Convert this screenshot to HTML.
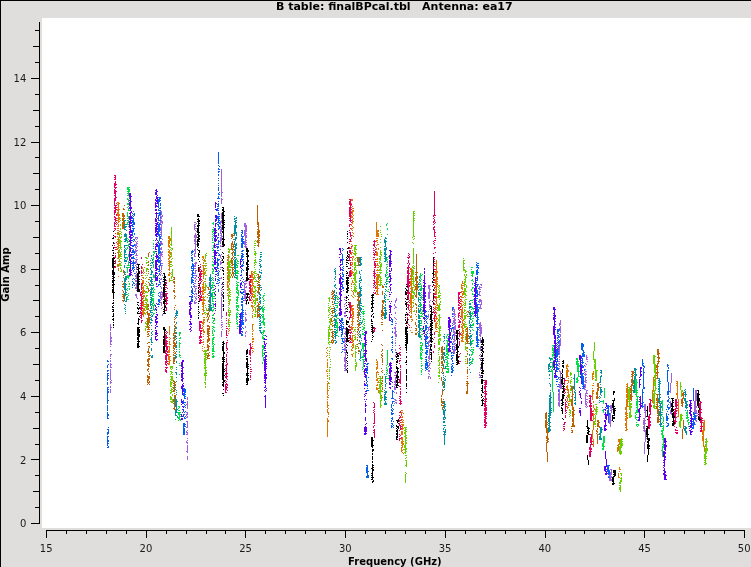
<!DOCTYPE html>
<html><head><meta charset="utf-8"><title>B table: finalBPcal.tbl Antenna: ea17</title>
<style>
html,body{margin:0;padding:0;background:#dfdedc;}
body{width:751px;height:567px;overflow:hidden;position:relative;font-family:"DejaVu Sans","Liberation Sans",sans-serif;}
svg{position:absolute;left:0;top:0;display:block}
svg{will-change:transform}
text{font-family:"DejaVu Sans","Liberation Sans",sans-serif;font-size:10px;fill:#1a1a1a}
.t{font-size:11px}
.b{font-weight:bold;fill:#000}
</style></head><body>
<svg width="751" height="567" viewBox="0 0 751 567">
<rect x="0" y="0" width="751" height="567" fill="#dfdedc"/>
<rect x="0" y="0" width="751" height="1" fill="#000"/>
<rect x="0" y="0" width="1" height="567" fill="#000"/>
<rect x="42" y="18" width="709" height="510" fill="#fff"/>

<g fill="#000" shape-rendering="crispEdges">
<rect x="39" y="22" width="1" height="502"/>
<rect x="31" y="523" width="8" height="1"/>
<rect x="35" y="507" width="4" height="1"/>
<rect x="33" y="491" width="6" height="1"/>
<rect x="35" y="475" width="4" height="1"/>
<rect x="31" y="459" width="8" height="1"/>
<rect x="35" y="444" width="4" height="1"/>
<rect x="33" y="428" width="6" height="1"/>
<rect x="35" y="412" width="4" height="1"/>
<rect x="31" y="396" width="8" height="1"/>
<rect x="35" y="380" width="4" height="1"/>
<rect x="33" y="364" width="6" height="1"/>
<rect x="35" y="348" width="4" height="1"/>
<rect x="31" y="332" width="8" height="1"/>
<rect x="35" y="316" width="4" height="1"/>
<rect x="33" y="300" width="6" height="1"/>
<rect x="35" y="285" width="4" height="1"/>
<rect x="31" y="269" width="8" height="1"/>
<rect x="35" y="253" width="4" height="1"/>
<rect x="33" y="237" width="6" height="1"/>
<rect x="35" y="221" width="4" height="1"/>
<rect x="31" y="205" width="8" height="1"/>
<rect x="35" y="189" width="4" height="1"/>
<rect x="33" y="173" width="6" height="1"/>
<rect x="35" y="157" width="4" height="1"/>
<rect x="31" y="142" width="8" height="1"/>
<rect x="35" y="126" width="4" height="1"/>
<rect x="33" y="110" width="6" height="1"/>
<rect x="35" y="94" width="4" height="1"/>
<rect x="31" y="78" width="8" height="1"/>
<rect x="35" y="62" width="4" height="1"/>
<rect x="33" y="46" width="6" height="1"/>
<rect x="35" y="30" width="4" height="1"/>
<rect x="46" y="530" width="699" height="1"/>
<rect x="46" y="530" width="1" height="8"/>
<rect x="66" y="530" width="1" height="4"/>
<rect x="86" y="530" width="1" height="4"/>
<rect x="106" y="530" width="1" height="4"/>
<rect x="126" y="530" width="1" height="4"/>
<rect x="146" y="530" width="1" height="8"/>
<rect x="166" y="530" width="1" height="4"/>
<rect x="186" y="530" width="1" height="4"/>
<rect x="206" y="530" width="1" height="4"/>
<rect x="225" y="530" width="1" height="4"/>
<rect x="245" y="530" width="1" height="8"/>
<rect x="265" y="530" width="1" height="4"/>
<rect x="285" y="530" width="1" height="4"/>
<rect x="305" y="530" width="1" height="4"/>
<rect x="325" y="530" width="1" height="4"/>
<rect x="345" y="530" width="1" height="8"/>
<rect x="365" y="530" width="1" height="4"/>
<rect x="385" y="530" width="1" height="4"/>
<rect x="405" y="530" width="1" height="4"/>
<rect x="425" y="530" width="1" height="4"/>
<rect x="445" y="530" width="1" height="8"/>
<rect x="465" y="530" width="1" height="4"/>
<rect x="485" y="530" width="1" height="4"/>
<rect x="505" y="530" width="1" height="4"/>
<rect x="525" y="530" width="1" height="4"/>
<rect x="545" y="530" width="1" height="8"/>
<rect x="565" y="530" width="1" height="4"/>
<rect x="584" y="530" width="1" height="4"/>
<rect x="604" y="530" width="1" height="4"/>
<rect x="624" y="530" width="1" height="4"/>
<rect x="644" y="530" width="1" height="8"/>
<rect x="664" y="530" width="1" height="4"/>
<rect x="684" y="530" width="1" height="4"/>
<rect x="704" y="530" width="1" height="4"/>
<rect x="724" y="530" width="1" height="4"/>
<rect x="744" y="530" width="1" height="8"/>
</g>
<text x="26.3" y="527.1" text-anchor="end">0</text>
<text x="26.3" y="463.5" text-anchor="end">2</text>
<text x="26.3" y="400.0" text-anchor="end">4</text>
<text x="26.3" y="336.4" text-anchor="end">6</text>
<text x="26.3" y="272.8" text-anchor="end">8</text>
<text x="26.3" y="209.2" text-anchor="end">10</text>
<text x="26.3" y="145.7" text-anchor="end">12</text>
<text x="26.3" y="82.1" text-anchor="end">14</text>
<text x="46.2" y="551.6" text-anchor="middle">15</text>
<text x="145.9" y="551.6" text-anchor="middle">20</text>
<text x="245.6" y="551.6" text-anchor="middle">25</text>
<text x="345.3" y="551.6" text-anchor="middle">30</text>
<text x="445.1" y="551.6" text-anchor="middle">35</text>
<text x="544.8" y="551.6" text-anchor="middle">40</text>
<text x="644.5" y="551.6" text-anchor="middle">45</text>
<text x="744.2" y="551.6" text-anchor="middle">50</text>
<text class="b t" x="394.3" y="9.5" text-anchor="middle" xml:space="preserve">B table: finalBPcal.tbl   Antenna: ea17</text>
<text class="b" x="394.9" y="564.6" text-anchor="middle">Frequency (GHz)</text>
<text class="b" transform="translate(9,274.6) rotate(-90)" text-anchor="middle">Gain Amp</text>
<g shape-rendering="crispEdges" fill="none" stroke-width="1">
<path stroke="#0060f0" d="M107.5 360v2M107.5 365v3M107.5 370v2M107.5 373v8M107.5 382v3M107.5 387v17M107.5 405v6M107.5 412v7M107.5 429v1M107.5 432v3M107.5 436v10M107.5 447v1M108.5 361v1M108.5 364v1M108.5 370v1M108.5 373v1M108.5 375v1M108.5 378v1M108.5 387v1M108.5 389v1M108.5 391v2M108.5 400v1M108.5 414v2M108.5 418v1M108.5 427v1M108.5 429v5M108.5 436v1M108.5 440v2M108.5 443v1M108.5 446v2M132.5 213v1M132.5 215v1M132.5 217v2M132.5 220v3M132.5 224v3M132.5 228v1M132.5 230v6M132.5 237v1M132.5 240v1M132.5 245v2M132.5 248v1M132.5 250v3M132.5 254v1M132.5 257v2M132.5 262v2M132.5 265v1M132.5 267v3M132.5 275v1M132.5 279v1M132.5 281v1M132.5 284v2M132.5 287v1M133.5 211v1M133.5 214v1M133.5 216v1M133.5 218v7M133.5 226v1M133.5 228v4M133.5 236v1M133.5 239v1M133.5 241v1M133.5 245v2M133.5 249v4M133.5 254v1M133.5 256v3M133.5 260v9M133.5 270v2M133.5 278v1M133.5 282v2M134.5 213v3M134.5 222v3M134.5 228v1M134.5 233v2M134.5 239v2M134.5 244v2M134.5 251v3M134.5 258v1M134.5 262v2M134.5 267v1M134.5 269v1M134.5 273v1M134.5 279v1M134.5 283v1M134.5 285v1M158.5 197v1M158.5 199v9M158.5 209v2M158.5 213v1M158.5 215v6M158.5 222v1M158.5 224v12M158.5 241v3M158.5 245v10M158.5 256v7M158.5 266v1M158.5 269v1M158.5 271v1M158.5 275v1M158.5 284v2M158.5 293v1M158.5 295v1M158.5 299v3M158.5 303v2M158.5 306v1M159.5 197v5M159.5 208v1M159.5 210v1M159.5 212v4M159.5 220v1M159.5 223v9M159.5 234v7M159.5 243v11M159.5 255v1M159.5 257v2M159.5 260v3M159.5 265v7M159.5 273v2M159.5 278v1M159.5 280v3M159.5 284v1M159.5 292v1M159.5 296v1M159.5 299v4M159.5 304v1M160.5 197v2M160.5 200v1M160.5 203v3M160.5 207v2M160.5 210v1M160.5 212v3M160.5 217v1M160.5 220v1M160.5 224v1M160.5 229v1M160.5 234v1M160.5 236v3M160.5 241v1M160.5 244v2M160.5 251v2M160.5 261v1M160.5 263v3M160.5 282v1M160.5 286v1M183.5 388v2M183.5 391v1M183.5 393v3M183.5 400v4M183.5 406v1M183.5 409v1M183.5 411v1M183.5 414v1M183.5 416v1M183.5 423v12M184.5 388v11M184.5 402v1M184.5 404v1M184.5 406v1M184.5 412v1M184.5 414v1M184.5 417v2M184.5 423v4M184.5 428v7M185.5 389v4M185.5 394v1M185.5 396v1M185.5 398v1M185.5 402v1M185.5 405v1M185.5 407v1M185.5 411v1M185.5 416v1M185.5 418v1M185.5 424v1M185.5 426v1M191.5 251v3M191.5 255v1M191.5 257v2M191.5 260v1M191.5 266v3M191.5 270v1M191.5 274v1M191.5 277v7M191.5 286v2M191.5 290v3M191.5 294v1M191.5 296v5M192.5 250v3M192.5 254v1M192.5 257v5M192.5 263v4M192.5 268v1M192.5 270v8M192.5 279v4M192.5 288v6M192.5 295v3M192.5 299v3M193.5 251v1M193.5 264v7M193.5 272v2M193.5 275v1M193.5 277v1M193.5 280v1M193.5 282v1M193.5 284v1M193.5 286v1M193.5 293v1M217.5 198v1M217.5 204v1M217.5 206v1M217.5 208v3M217.5 216v3M217.5 222v1M217.5 224v1M217.5 237v2M217.5 244v1M217.5 246v3M217.5 250v1M217.5 252v1M217.5 258v11M217.5 271v1M217.5 273v1M217.5 275v1M217.5 279v1M217.5 281v1M217.5 283v1M218.5 152v12M218.5 165v1M218.5 168v2M218.5 171v2M218.5 174v2M218.5 178v1M218.5 180v1M218.5 183v1M218.5 185v1M218.5 187v4M218.5 193v2M218.5 196v3M218.5 201v1M218.5 203v4M218.5 208v1M218.5 210v1M218.5 212v3M218.5 216v7M218.5 224v3M218.5 228v2M218.5 233v3M218.5 237v1M218.5 240v5M218.5 246v2M218.5 250v1M218.5 253v1M218.5 255v1M218.5 259v2M218.5 263v3M218.5 268v1M218.5 270v1M218.5 272v4M218.5 277v1M218.5 279v2M218.5 283v1M218.5 285v1M218.5 289v3M219.5 166v1M219.5 169v1M219.5 171v1M219.5 192v1M219.5 194v1M219.5 198v1M219.5 214v1M219.5 216v1M219.5 218v1M219.5 220v1M219.5 222v2M219.5 226v3M219.5 241v1M219.5 254v2M219.5 259v1M219.5 271v1M219.5 278v1M219.5 280v1M219.5 282v1M241.5 230v1M241.5 232v1M241.5 234v3M241.5 238v4M241.5 243v5M241.5 251v1M241.5 253v1M241.5 255v3M241.5 259v1M241.5 265v1M241.5 270v3M241.5 274v2M241.5 278v1M241.5 282v1M241.5 284v1M241.5 289v1M241.5 292v2M241.5 298v2M241.5 301v2M241.5 304v2M241.5 309v1M241.5 312v1M241.5 314v5M241.5 321v6M241.5 328v2M241.5 333v3M242.5 230v4M242.5 236v12M242.5 250v2M242.5 253v5M242.5 259v2M242.5 264v3M242.5 269v1M242.5 277v1M242.5 281v1M242.5 285v1M242.5 289v1M242.5 292v2M242.5 296v4M242.5 301v2M242.5 304v21M242.5 327v1M242.5 331v2M242.5 334v2M243.5 236v1M243.5 239v1M243.5 241v3M243.5 250v1M243.5 254v1M243.5 256v1M243.5 259v1M243.5 261v3M243.5 265v1M243.5 270v1M243.5 279v1M243.5 282v1M243.5 289v1M243.5 291v2M243.5 294v1M243.5 298v1M243.5 300v1M243.5 310v1M243.5 312v1M243.5 314v1M243.5 316v1M243.5 320v1M243.5 322v3M243.5 328v1M341.5 318v5M341.5 324v7M341.5 332v1M341.5 334v3M341.5 338v1M341.5 343v1M341.5 352v1M342.5 248v1M342.5 250v1M342.5 254v11M342.5 267v1M342.5 269v2M342.5 272v3M342.5 276v1M342.5 278v2M342.5 281v2M342.5 284v5M342.5 318v3M342.5 322v2M342.5 326v1M342.5 328v7M342.5 338v4M342.5 343v1M342.5 347v1M342.5 349v1M342.5 351v1M343.5 249v1M343.5 259v1M343.5 266v1M343.5 268v1M343.5 270v1M343.5 274v3M343.5 279v1M343.5 281v1M343.5 287v2M343.5 290v1M343.5 322v1M343.5 324v1M343.5 326v3M343.5 338v1M343.5 341v2M343.5 349v1M366.5 364v1M366.5 369v1M366.5 371v2M366.5 376v4M366.5 382v2M366.5 385v1M366.5 390v1M366.5 465v1M366.5 467v6M366.5 476v2M367.5 363v2M367.5 366v5M367.5 372v2M367.5 381v1M367.5 384v3M367.5 388v1M367.5 390v1M367.5 465v13M368.5 363v1M368.5 377v1M368.5 390v1M368.5 471v1M368.5 475v3M391.5 319v1M391.5 321v1M391.5 324v1M391.5 337v1M391.5 342v1M391.5 349v2M391.5 358v1M391.5 398v1M391.5 404v4M391.5 409v2M391.5 412v3M391.5 418v1M391.5 420v2M391.5 423v1M391.5 425v3M392.5 319v4M392.5 324v1M392.5 328v1M392.5 331v2M392.5 336v2M392.5 339v1M392.5 341v3M392.5 345v1M392.5 347v1M392.5 349v1M392.5 351v2M392.5 358v2M392.5 382v1M392.5 386v1M392.5 390v9M392.5 401v3M392.5 408v1M392.5 410v2M392.5 413v2M392.5 417v3M392.5 423v2M392.5 426v1M393.5 391v1M393.5 398v1M393.5 401v1M393.5 405v1M393.5 409v1M393.5 413v1M393.5 421v1M393.5 425v1M393.5 427v1M425.5 311v2M425.5 315v2M425.5 318v1M425.5 320v1M425.5 325v6M425.5 336v4M425.5 341v6M425.5 348v1M425.5 352v2M425.5 357v1M425.5 359v1M425.5 361v1M425.5 363v6M425.5 370v1M426.5 311v1M426.5 315v3M426.5 319v1M426.5 321v2M426.5 325v5M426.5 332v1M426.5 334v6M426.5 341v1M426.5 343v1M426.5 345v4M426.5 350v5M426.5 356v2M426.5 359v7M426.5 367v3M427.5 316v1M427.5 318v1M427.5 323v1M427.5 327v1M427.5 331v1M427.5 333v1M427.5 336v3M427.5 342v2M427.5 346v1M427.5 348v1M427.5 350v3M427.5 354v1M427.5 362v6M427.5 369v1M451.5 328v4M451.5 339v1M451.5 341v2M451.5 352v2M451.5 355v2M451.5 358v2M451.5 364v1M451.5 366v4M451.5 371v2M451.5 375v1M452.5 307v4M452.5 313v2M452.5 316v1M452.5 323v1M452.5 325v1M452.5 327v2M452.5 335v4M452.5 343v2M452.5 346v4M452.5 352v1M452.5 355v1M452.5 357v2M452.5 360v2M452.5 363v1M452.5 365v2M452.5 368v5M453.5 307v1M453.5 327v1M453.5 334v1M453.5 353v1M453.5 355v1M453.5 363v1M453.5 367v1M453.5 370v1M476.5 262v1M476.5 264v2M476.5 267v1M476.5 270v5M476.5 280v1M476.5 282v1M476.5 286v2M476.5 289v3M476.5 293v1M476.5 295v1M476.5 298v1M476.5 300v1M476.5 302v3M476.5 307v2M476.5 310v1M476.5 313v1M476.5 315v1M476.5 317v1M476.5 320v2M476.5 323v1M476.5 327v1M476.5 331v4M476.5 336v5M476.5 342v1M476.5 345v2M477.5 263v1M477.5 265v3M477.5 269v6M477.5 276v5M477.5 284v3M477.5 290v7M477.5 298v1M477.5 304v21M477.5 327v20M478.5 263v1M478.5 265v1M478.5 267v2M478.5 272v1M478.5 284v1M478.5 288v1M478.5 294v1M478.5 301v1M478.5 304v1M478.5 307v1M478.5 309v3M478.5 317v1M478.5 319v1M478.5 323v1M478.5 327v1M478.5 329v1M478.5 339v2M478.5 342v1M478.5 344v1M478.5 346v1M556.5 350v8M556.5 359v1M556.5 361v11M556.5 376v2M556.5 379v1M556.5 381v1M556.5 384v1M557.5 329v5M557.5 335v1M557.5 337v2M557.5 340v1M557.5 342v1M557.5 344v1M557.5 346v1M557.5 348v9M557.5 358v4M557.5 364v2M557.5 367v3M557.5 371v1M557.5 376v1M557.5 379v1M557.5 381v1M557.5 386v1M558.5 329v3M558.5 333v1M558.5 335v3M558.5 339v1M558.5 341v3M558.5 345v1M558.5 347v1M558.5 349v1M558.5 351v1M558.5 353v2M558.5 368v2M558.5 377v2M558.5 384v1M558.5 386v1M558.5 390v2M559.5 329v1M559.5 334v1M559.5 340v2M559.5 345v1M581.5 343v7M581.5 356v1M581.5 358v1M581.5 360v1M581.5 362v1M581.5 364v1M581.5 373v5M581.5 379v2M582.5 343v8M582.5 353v4M582.5 358v6M582.5 365v2M582.5 373v12M582.5 386v1M582.5 388v1M583.5 344v3M583.5 350v7M583.5 362v1M583.5 366v2M583.5 373v1M583.5 376v13M584.5 352v1M584.5 354v3M584.5 365v1M584.5 369v2M584.5 386v1M607.5 405v4M607.5 410v4M607.5 465v7M608.5 405v18M608.5 465v10M608.5 476v2M609.5 406v1M609.5 413v2M609.5 465v1M609.5 470v5M609.5 477v1M642.5 359v7M642.5 389v19M643.5 363v1M643.5 365v2M643.5 368v21M643.5 392v1M643.5 402v1M643.5 406v1M644.5 366v2M644.5 372v1M644.5 387v2M666.5 409v1M666.5 413v8M666.5 422v1M666.5 426v1M667.5 364v3M667.5 370v12M667.5 391v4M667.5 400v2M667.5 405v3M667.5 411v1M667.5 416v5M667.5 423v1M667.5 425v2M668.5 365v1M668.5 367v2M668.5 370v1M668.5 382v13M668.5 396v2M668.5 399v3M668.5 404v1M668.5 407v3M668.5 414v1M668.5 418v1M668.5 423v3M669.5 391v1M669.5 398v1M669.5 402v1M669.5 407v2M692.5 421v1M692.5 423v3M692.5 427v2M693.5 388v13M693.5 412v3M693.5 416v1M693.5 418v11M694.5 413v7M694.5 422v3M695.5 413v1M695.5 415v5"/>
<path stroke="#a060e0" d="M110.5 324v7M110.5 332v13M110.5 346v1M110.5 350v1M110.5 354v3M110.5 358v1M110.5 360v2M110.5 363v5M110.5 369v11M110.5 381v3M110.5 386v2M110.5 389v4M111.5 327v1M111.5 337v2M111.5 340v2M111.5 344v1M111.5 354v1M111.5 364v1M111.5 367v1M111.5 380v1M111.5 382v1M135.5 237v2M135.5 241v1M135.5 244v4M135.5 249v4M135.5 255v1M135.5 259v1M135.5 261v3M135.5 265v1M135.5 273v1M135.5 275v2M135.5 278v1M135.5 280v2M135.5 284v1M135.5 287v2M135.5 294v2M136.5 237v1M136.5 239v1M136.5 242v4M136.5 247v2M136.5 250v2M136.5 253v3M136.5 257v1M136.5 259v4M136.5 264v1M136.5 266v4M136.5 271v2M136.5 274v5M136.5 280v2M136.5 283v6M136.5 290v1M136.5 294v4M137.5 237v2M137.5 241v1M137.5 243v1M137.5 246v1M137.5 250v1M137.5 255v1M137.5 259v1M137.5 263v1M137.5 298v1M160.5 211v1M160.5 215v2M160.5 218v2M160.5 221v3M160.5 227v2M160.5 230v1M160.5 232v1M160.5 242v2M160.5 248v2M160.5 253v8M160.5 262v1M160.5 270v1M160.5 272v1M160.5 274v2M160.5 279v1M160.5 283v2M160.5 292v7M160.5 300v1M160.5 302v1M161.5 211v4M161.5 216v3M161.5 220v3M161.5 224v13M161.5 238v1M161.5 241v4M161.5 247v3M161.5 252v4M161.5 260v1M161.5 263v1M161.5 265v5M161.5 271v1M161.5 273v1M161.5 278v2M161.5 287v2M161.5 291v2M161.5 294v1M161.5 296v4M161.5 302v4M161.5 308v1M162.5 215v2M162.5 221v3M162.5 239v1M162.5 243v2M162.5 251v2M162.5 254v1M162.5 256v1M162.5 263v1M162.5 265v1M162.5 275v1M162.5 281v1M162.5 292v6M162.5 307v1M162.5 314v2M186.5 404v1M186.5 412v1M186.5 414v2M186.5 417v1M186.5 421v1M186.5 427v1M186.5 431v2M186.5 434v1M186.5 441v2M186.5 451v1M187.5 397v3M187.5 401v8M187.5 412v3M187.5 416v2M187.5 421v7M187.5 430v1M187.5 432v3M187.5 438v1M187.5 440v1M187.5 442v2M187.5 445v8M187.5 456v4M194.5 222v1M194.5 224v6M194.5 235v3M194.5 239v3M194.5 243v1M194.5 249v2M194.5 253v4M194.5 259v1M194.5 263v1M194.5 265v2M194.5 268v1M194.5 273v1M194.5 275v1M194.5 278v1M194.5 283v1M194.5 285v3M194.5 291v1M194.5 294v1M194.5 296v1M194.5 301v3M195.5 222v1M195.5 224v1M195.5 226v1M195.5 228v1M195.5 230v1M195.5 233v21M195.5 256v1M195.5 262v5M195.5 268v1M195.5 270v4M195.5 275v1M195.5 277v2M195.5 280v2M195.5 283v1M195.5 286v1M195.5 288v4M195.5 293v1M195.5 297v2M195.5 300v1M195.5 302v2M196.5 223v1M196.5 228v1M196.5 231v1M196.5 235v3M196.5 241v1M196.5 244v1M196.5 262v2M196.5 270v1M196.5 275v2M196.5 279v1M196.5 286v1M196.5 288v1M196.5 293v2M196.5 296v1M196.5 298v2M196.5 302v1M220.5 221v4M220.5 226v2M220.5 229v5M220.5 235v1M220.5 237v7M220.5 245v2M220.5 249v1M220.5 255v3M220.5 261v4M220.5 267v1M220.5 269v1M220.5 278v1M221.5 169v28M221.5 198v6M221.5 213v6M221.5 220v3M221.5 225v1M221.5 227v5M221.5 233v8M221.5 246v1M221.5 254v1M221.5 258v1M221.5 260v1M221.5 262v2M221.5 267v1M221.5 277v2M221.5 284v1M221.5 288v1M221.5 290v1M221.5 292v4M221.5 297v22M221.5 320v1M221.5 322v1M221.5 324v2M221.5 327v1M221.5 331v6M222.5 192v1M222.5 199v1M222.5 224v1M222.5 236v1M222.5 245v1M222.5 269v1M222.5 282v1M222.5 284v1M222.5 286v1M222.5 289v1M222.5 291v1M222.5 295v2M222.5 304v1M222.5 306v1M222.5 316v1M222.5 322v1M222.5 324v1M222.5 326v1M222.5 329v1M244.5 223v4M244.5 230v6M244.5 241v4M244.5 246v1M244.5 281v1M244.5 283v10M244.5 294v5M244.5 300v1M245.5 223v25M245.5 280v2M245.5 283v2M245.5 287v1M245.5 290v11M245.5 303v1M245.5 310v1M245.5 312v3M245.5 317v5M245.5 326v2M245.5 332v2M245.5 335v2M246.5 225v7M246.5 233v1M246.5 235v3M246.5 240v1M246.5 242v1M246.5 244v1M246.5 246v2M246.5 281v1M246.5 283v1M246.5 286v2M246.5 296v1M246.5 304v1M246.5 314v1M246.5 319v2M246.5 331v1M344.5 297v1M344.5 299v1M344.5 304v1M344.5 306v1M344.5 312v2M344.5 315v2M344.5 328v1M344.5 333v1M344.5 336v1M344.5 338v5M344.5 344v3M344.5 348v3M344.5 352v1M344.5 357v5M344.5 364v3M344.5 368v1M344.5 370v1M345.5 297v1M345.5 300v1M345.5 303v1M345.5 308v2M345.5 311v3M345.5 315v2M345.5 328v2M345.5 331v4M345.5 337v2M345.5 340v2M345.5 343v1M345.5 345v6M345.5 352v19M346.5 342v1M346.5 349v1M346.5 354v1M346.5 362v1M346.5 366v1M346.5 370v1M394.5 304v2M394.5 308v1M394.5 317v1M394.5 327v2M394.5 332v2M394.5 372v1M394.5 375v1M394.5 381v2M394.5 384v1M394.5 386v4M394.5 392v1M394.5 399v1M394.5 401v1M394.5 403v1M395.5 300v3M395.5 306v2M395.5 312v2M395.5 318v1M395.5 321v1M395.5 323v1M395.5 325v1M395.5 327v10M395.5 338v1M395.5 340v1M395.5 342v2M395.5 345v1M395.5 349v2M395.5 352v1M395.5 355v2M395.5 372v2M395.5 375v1M395.5 377v9M395.5 387v3M395.5 399v2M395.5 402v1M396.5 298v3M396.5 307v1M396.5 319v1M396.5 323v1M396.5 331v1M396.5 334v3M396.5 353v1M396.5 372v1M396.5 374v1M396.5 378v1M396.5 392v2M396.5 400v1M396.5 402v2M428.5 285v4M428.5 292v7M428.5 311v1M428.5 314v4M428.5 327v4M428.5 337v1M428.5 341v6M428.5 348v1M428.5 356v3M428.5 360v1M428.5 362v1M428.5 365v2M428.5 368v1M428.5 370v2M428.5 373v1M428.5 376v3M429.5 285v14M429.5 301v2M429.5 304v4M429.5 309v1M429.5 319v1M429.5 326v2M429.5 329v1M429.5 333v1M429.5 336v1M429.5 340v3M429.5 345v1M429.5 349v11M429.5 361v1M429.5 363v3M429.5 367v1M429.5 370v2M429.5 374v1M429.5 376v1M430.5 285v1M430.5 289v1M430.5 292v1M430.5 300v1M430.5 305v1M430.5 331v1M430.5 333v1M430.5 339v1M430.5 345v1M430.5 350v1M430.5 358v1M430.5 363v1M430.5 368v1M430.5 377v2M453.5 308v2M453.5 311v1M453.5 313v2M453.5 316v1M453.5 318v1M453.5 320v3M453.5 324v1M453.5 328v5M453.5 335v1M453.5 339v1M453.5 341v2M453.5 344v1M453.5 346v1M453.5 349v4M454.5 309v7M454.5 317v8M454.5 326v4M454.5 331v11M454.5 343v2M454.5 346v8M455.5 314v1M455.5 316v1M455.5 319v2M455.5 322v2M455.5 325v5M455.5 332v2M455.5 335v1M455.5 340v1M455.5 343v1M455.5 345v1M455.5 347v1M455.5 349v2M479.5 286v4M479.5 291v5M479.5 299v4M479.5 304v1M479.5 307v2M479.5 323v6M479.5 330v1M479.5 332v1M479.5 334v2M479.5 340v1M479.5 348v1M479.5 355v1M479.5 358v1M479.5 372v1M479.5 374v2M479.5 377v1M480.5 284v1M480.5 287v1M480.5 289v1M480.5 291v1M480.5 295v1M480.5 299v3M480.5 304v5M480.5 322v15M480.5 338v5M480.5 346v5M480.5 354v1M480.5 356v1M480.5 358v3M480.5 364v1M480.5 367v3M480.5 375v3M481.5 284v2M481.5 287v1M481.5 300v5M481.5 308v1M481.5 325v1M481.5 327v7M558.5 346v1M558.5 348v1M558.5 350v1M558.5 352v1M558.5 361v1M558.5 363v1M558.5 365v1M558.5 389v1M558.5 393v8M558.5 402v4M559.5 323v3M559.5 328v1M559.5 330v1M559.5 336v2M559.5 342v3M559.5 346v9M559.5 356v2M559.5 359v1M559.5 361v1M559.5 363v2M559.5 366v1M559.5 368v1M559.5 370v2M559.5 377v1M559.5 379v1M559.5 382v1M559.5 384v4M559.5 389v18M560.5 320v5M560.5 326v7M560.5 334v3M560.5 338v8M560.5 371v18M560.5 400v1M561.5 384v5M584.5 372v1M584.5 374v1M584.5 381v1M584.5 384v2M584.5 387v3M585.5 363v1M585.5 366v1M585.5 369v1M585.5 371v1M585.5 373v3M585.5 377v6M585.5 384v4M585.5 389v1M585.5 393v12M585.5 406v1M586.5 355v5M586.5 364v1M586.5 371v1M586.5 374v1M586.5 377v1M586.5 380v1M586.5 382v1M586.5 390v4M586.5 395v1M586.5 399v1M586.5 401v1M586.5 403v3M586.5 407v1M587.5 357v1M587.5 359v1M587.5 361v1M587.5 390v1M587.5 393v1M587.5 396v1M587.5 399v1M587.5 402v1M587.5 406v1M609.5 415v9M609.5 475v2M609.5 478v3M610.5 405v4M610.5 410v1M610.5 413v14M610.5 469v1M610.5 472v9M611.5 405v8M611.5 420v1M611.5 469v6M611.5 476v2M611.5 479v2M612.5 409v1M643.5 418v1M643.5 420v5M643.5 426v3M643.5 430v1M644.5 404v7M644.5 412v1M644.5 418v14M644.5 442v12M645.5 404v14M645.5 420v1M645.5 423v1M645.5 430v12M646.5 435v1M646.5 438v1M670.5 383v10M670.5 401v7M670.5 410v4M671.5 373v10M671.5 412v3M694.5 401v12M695.5 390v23M695.5 420v1M695.5 424v1M696.5 390v11M696.5 406v2M696.5 410v4M696.5 415v2M696.5 418v1M696.5 420v2M697.5 413v1M697.5 415v1"/>
<path stroke="#000000" d="M112.5 238v1M112.5 245v1M112.5 250v1M112.5 255v1M112.5 258v10M112.5 270v5M112.5 276v1M112.5 278v1M112.5 280v3M112.5 284v2M112.5 287v1M112.5 289v4M112.5 303v1M112.5 306v2M112.5 309v1M112.5 311v1M112.5 316v1M112.5 319v1M113.5 231v1M113.5 235v1M113.5 237v2M113.5 242v2M113.5 247v2M113.5 250v1M113.5 252v2M113.5 255v1M113.5 257v42M113.5 300v1M113.5 302v2M113.5 305v1M113.5 307v1M113.5 309v3M113.5 313v4M113.5 318v3M113.5 322v1M113.5 324v2M113.5 327v1M114.5 258v1M114.5 261v1M114.5 263v1M114.5 266v1M114.5 272v3M114.5 277v1M114.5 280v1M114.5 284v1M114.5 292v1M137.5 264v1M137.5 267v1M137.5 269v1M137.5 273v19M137.5 302v1M137.5 304v1M137.5 307v2M137.5 312v2M137.5 323v1M137.5 327v9M137.5 337v3M137.5 341v1M137.5 343v5M138.5 264v28M138.5 302v1M138.5 305v1M138.5 308v2M138.5 311v1M138.5 313v1M138.5 318v7M138.5 327v21M139.5 264v1M139.5 268v1M139.5 271v3M139.5 276v1M139.5 279v1M139.5 281v1M139.5 283v2M139.5 289v3M139.5 307v2M139.5 313v1M139.5 316v1M139.5 319v1M139.5 327v1M139.5 329v4M139.5 334v3M139.5 341v1M139.5 346v1M163.5 273v1M163.5 277v1M163.5 279v1M163.5 281v1M163.5 284v2M163.5 287v10M163.5 299v1M163.5 301v3M163.5 309v1M163.5 311v1M163.5 313v1M163.5 327v3M163.5 336v2M163.5 339v6M163.5 346v7M164.5 273v41M164.5 327v26M165.5 276v2M165.5 279v2M165.5 282v1M165.5 284v1M165.5 291v1M165.5 300v2M165.5 306v2M165.5 313v1M165.5 329v2M197.5 214v3M197.5 219v1M197.5 221v1M197.5 225v2M197.5 228v5M197.5 234v1M197.5 237v1M197.5 239v8M197.5 249v1M198.5 214v3M198.5 218v24M198.5 243v3M198.5 247v1M198.5 250v1M198.5 253v4M198.5 259v1M198.5 265v1M198.5 267v5M198.5 277v1M198.5 281v1M198.5 283v1M198.5 285v1M198.5 287v2M198.5 290v4M198.5 295v1M198.5 297v1M198.5 301v1M198.5 303v1M198.5 306v2M198.5 309v1M198.5 311v1M198.5 313v1M198.5 315v1M198.5 317v2M199.5 216v1M199.5 220v2M199.5 223v1M199.5 225v1M199.5 232v1M199.5 235v2M199.5 238v2M199.5 241v1M199.5 250v3M199.5 254v1M199.5 257v1M199.5 261v1M199.5 274v1M199.5 285v1M199.5 301v1M199.5 312v1M222.5 207v1M222.5 209v2M222.5 212v12M222.5 225v5M222.5 231v2M222.5 238v2M222.5 241v4M222.5 246v1M222.5 252v1M222.5 256v1M222.5 259v2M222.5 262v1M222.5 267v1M222.5 270v1M222.5 283v1M222.5 287v1M222.5 294v1M222.5 342v1M222.5 344v1M222.5 346v5M222.5 357v3M222.5 361v1M222.5 363v17M222.5 382v1M222.5 384v2M222.5 393v1M223.5 207v40M223.5 253v1M223.5 256v3M223.5 261v2M223.5 268v1M223.5 270v2M223.5 273v2M223.5 277v1M223.5 279v1M223.5 282v1M223.5 284v1M223.5 286v1M223.5 289v1M223.5 292v2M223.5 295v4M223.5 300v2M223.5 304v3M223.5 308v3M223.5 341v46M223.5 389v1M223.5 393v1M223.5 395v1M224.5 211v1M224.5 215v1M224.5 220v1M224.5 222v1M224.5 224v1M224.5 227v1M224.5 239v1M224.5 244v2M224.5 343v1M224.5 352v2M224.5 357v1M224.5 359v1M224.5 361v1M224.5 369v1M224.5 371v1M224.5 375v1M224.5 380v2M246.5 248v4M246.5 253v2M246.5 256v1M246.5 262v3M246.5 267v4M246.5 272v4M246.5 277v4M246.5 293v2M246.5 297v2M246.5 300v4M246.5 350v5M246.5 356v1M246.5 358v2M246.5 362v6M246.5 373v3M246.5 378v5M246.5 384v1M247.5 248v33M247.5 293v5M247.5 299v2M247.5 349v5M247.5 356v1M247.5 358v27M248.5 250v2M248.5 255v2M248.5 260v2M248.5 264v1M248.5 266v1M248.5 268v2M248.5 278v2M248.5 293v2M248.5 297v1M248.5 302v2M248.5 364v1M248.5 366v1M248.5 368v1M248.5 373v1M248.5 375v1M248.5 378v3M346.5 257v1M346.5 259v2M346.5 262v1M346.5 264v1M346.5 266v1M346.5 271v1M346.5 273v1M346.5 275v1M346.5 277v2M346.5 280v5M346.5 288v2M346.5 291v2M346.5 296v3M346.5 300v1M346.5 302v1M346.5 305v1M346.5 308v1M346.5 311v1M346.5 315v1M346.5 320v5M346.5 327v10M346.5 338v4M346.5 344v1M346.5 347v1M346.5 350v3M346.5 358v1M346.5 360v1M346.5 369v1M347.5 231v1M347.5 233v2M347.5 236v1M347.5 238v1M347.5 242v1M347.5 248v1M347.5 251v3M347.5 255v2M347.5 258v1M347.5 260v1M347.5 262v1M347.5 266v1M347.5 272v2M347.5 277v16M347.5 297v1M347.5 307v1M347.5 309v1M347.5 311v1M347.5 317v1M347.5 321v2M347.5 324v1M347.5 328v14M347.5 345v1M347.5 352v2M347.5 355v1M347.5 357v1M347.5 361v1M347.5 363v1M347.5 365v1M347.5 368v1M347.5 370v3M348.5 247v2M348.5 254v1M348.5 256v2M348.5 260v1M348.5 263v1M348.5 268v1M348.5 275v1M348.5 277v2M348.5 280v1M348.5 282v2M348.5 285v1M348.5 287v2M348.5 290v1M348.5 295v1M348.5 299v1M348.5 302v1M348.5 304v1M348.5 321v2M348.5 326v1M348.5 329v5M348.5 338v1M348.5 340v2M371.5 295v1M371.5 297v1M371.5 301v1M371.5 303v2M371.5 307v2M371.5 311v1M371.5 315v2M371.5 319v3M371.5 323v1M371.5 325v1M371.5 327v1M371.5 329v1M371.5 331v1M371.5 341v1M371.5 437v10M371.5 468v1M371.5 473v1M371.5 475v1M371.5 477v1M371.5 479v1M372.5 294v14M372.5 309v3M372.5 314v1M372.5 321v1M372.5 323v1M372.5 325v9M372.5 335v1M372.5 337v1M372.5 339v1M372.5 437v11M372.5 449v3M372.5 453v2M372.5 456v4M372.5 461v2M372.5 464v16M372.5 481v2M373.5 294v2M373.5 297v1M373.5 300v1M373.5 303v1M373.5 307v1M373.5 313v1M373.5 316v2M373.5 327v1M373.5 332v1M373.5 336v1M373.5 440v1M373.5 445v1M373.5 449v2M373.5 465v1M373.5 467v1M373.5 469v2M373.5 477v1M373.5 480v2M396.5 352v1M396.5 354v1M396.5 356v2M396.5 359v1M396.5 361v2M396.5 364v1M396.5 366v3M396.5 371v1M396.5 375v3M396.5 380v3M396.5 384v4M396.5 420v1M396.5 425v2M396.5 428v1M396.5 430v2M396.5 433v2M396.5 436v4M397.5 353v4M397.5 358v1M397.5 360v3M397.5 367v19M397.5 387v1M397.5 420v3M397.5 426v2M397.5 429v9M397.5 439v1M398.5 353v1M398.5 355v2M398.5 358v1M398.5 368v1M398.5 371v2M398.5 376v2M398.5 379v1M398.5 382v1M398.5 385v1M398.5 419v3M398.5 423v1M398.5 426v3M405.5 288v1M405.5 291v4M405.5 298v1M405.5 301v1M405.5 303v2M405.5 314v2M405.5 317v1M405.5 319v2M405.5 323v1M405.5 327v8M405.5 336v1M405.5 338v1M405.5 340v1M405.5 342v1M405.5 344v2M405.5 347v1M405.5 362v1M406.5 284v1M406.5 286v1M406.5 289v2M406.5 292v3M406.5 299v1M406.5 302v5M406.5 308v2M406.5 312v1M406.5 314v1M406.5 321v3M406.5 325v1M406.5 327v24M406.5 352v1M406.5 356v2M406.5 360v3M406.5 364v1M406.5 369v5M406.5 375v6M406.5 383v4M406.5 388v1M406.5 392v1M407.5 286v1M407.5 290v1M407.5 297v1M407.5 299v1M407.5 314v1M407.5 319v2M407.5 322v1M407.5 327v2M407.5 331v1M407.5 333v11M430.5 306v1M430.5 308v1M430.5 311v1M430.5 314v6M430.5 321v1M430.5 323v4M430.5 328v3M430.5 332v1M430.5 334v2M430.5 337v2M430.5 340v2M430.5 344v1M430.5 346v4M430.5 352v1M430.5 354v1M431.5 306v37M431.5 344v3M431.5 349v2M431.5 352v8M431.5 361v1M432.5 273v1M432.5 278v1M432.5 281v2M432.5 286v1M432.5 301v1M432.5 312v1M432.5 314v1M432.5 320v1M432.5 322v2M432.5 325v1M432.5 327v1M432.5 329v1M432.5 334v1M432.5 338v1M432.5 341v1M433.5 257v2M433.5 260v3M433.5 264v2M433.5 269v7M433.5 277v1M433.5 279v1M433.5 282v1M433.5 284v1M433.5 289v2M433.5 293v1M433.5 295v4M433.5 303v1M456.5 330v4M456.5 335v5M456.5 344v6M456.5 352v1M456.5 354v7M456.5 362v1M456.5 364v1M457.5 330v35M458.5 330v1M458.5 333v1M458.5 338v1M458.5 346v2M458.5 351v1M458.5 356v2M458.5 360v4M481.5 340v3M481.5 344v1M481.5 346v2M481.5 349v2M481.5 352v1M481.5 355v2M481.5 358v1M481.5 360v1M481.5 362v7M481.5 370v1M481.5 372v2M481.5 375v1M481.5 377v1M481.5 379v5M481.5 388v1M481.5 390v1M481.5 394v2M481.5 397v1M481.5 400v1M481.5 405v1M482.5 337v8M482.5 346v6M482.5 353v4M482.5 358v16M482.5 375v3M482.5 379v5M482.5 385v8M482.5 396v1M482.5 399v7M483.5 339v4M483.5 344v2M483.5 348v1M483.5 351v2M483.5 358v1M483.5 360v1M483.5 363v1M483.5 370v2M483.5 373v1M483.5 380v1M483.5 392v1M483.5 398v1M483.5 400v1M483.5 403v1M561.5 373v1M561.5 377v1M561.5 379v5M561.5 399v2M561.5 403v1M561.5 405v1M561.5 407v2M561.5 410v1M562.5 361v1M562.5 363v1M562.5 365v2M562.5 369v4M562.5 374v11M562.5 386v1M562.5 388v1M562.5 391v2M562.5 394v12M562.5 408v6M562.5 418v1M563.5 360v4M563.5 365v3M563.5 378v1M563.5 383v1M563.5 385v8M563.5 394v5M563.5 402v1M563.5 404v1M563.5 419v1M564.5 386v1M564.5 390v1M564.5 395v1M586.5 426v1M586.5 435v8M587.5 420v9M587.5 430v1M587.5 432v2M587.5 435v8M587.5 455v5M588.5 427v8M588.5 460v5M589.5 428v1M589.5 431v1M589.5 434v1M612.5 400v1M612.5 403v5M612.5 415v6M612.5 477v5M612.5 483v2M613.5 391v4M613.5 400v14M613.5 415v1M613.5 417v2M613.5 421v1M613.5 470v3M613.5 474v1M613.5 476v9M614.5 391v2M614.5 398v3M614.5 406v1M614.5 408v8M614.5 417v2M614.5 470v7M614.5 483v1M615.5 408v1M615.5 410v1M615.5 470v6M646.5 410v1M646.5 416v1M646.5 426v1M646.5 428v7M646.5 436v1M647.5 406v11M647.5 419v1M647.5 426v14M647.5 441v2M647.5 444v5M647.5 455v7M648.5 427v1M648.5 434v1M648.5 438v17M649.5 438v3M649.5 445v2M649.5 448v1M671.5 398v1M671.5 403v4M671.5 408v4M672.5 398v14M672.5 413v5M672.5 421v1M672.5 423v3M673.5 398v1M673.5 400v1M673.5 402v1M673.5 406v1M673.5 409v2M673.5 412v14M674.5 416v2M674.5 422v2M697.5 390v1M697.5 393v13M698.5 390v18M698.5 410v3M698.5 414v1M698.5 416v4M699.5 394v1M699.5 398v3M699.5 408v2M699.5 417v4M700.5 419v1"/>
<path stroke="#e00066" d="M114.5 175v1M114.5 177v1M114.5 179v1M114.5 183v5M114.5 189v5M114.5 195v1M114.5 198v8M114.5 207v2M114.5 210v5M114.5 216v2M114.5 219v1M114.5 222v5M114.5 228v1M114.5 230v1M114.5 236v1M114.5 243v1M114.5 245v1M114.5 247v1M114.5 257v1M114.5 267v1M115.5 175v5M115.5 181v5M115.5 187v2M115.5 190v11M115.5 205v8M115.5 217v5M115.5 223v1M115.5 226v1M115.5 228v2M115.5 233v1M115.5 236v2M115.5 247v1M115.5 249v1M115.5 253v1M115.5 255v3M115.5 260v4M115.5 266v2M116.5 184v1M116.5 187v1M116.5 191v1M116.5 197v1M116.5 203v1M116.5 205v1M116.5 207v1M116.5 209v1M116.5 214v2M116.5 218v1M116.5 220v1M116.5 222v1M116.5 224v1M116.5 242v1M116.5 247v1M116.5 249v1M140.5 292v4M140.5 300v1M140.5 303v1M140.5 305v1M140.5 307v3M140.5 311v3M140.5 315v1M140.5 317v1M141.5 257v2M141.5 266v3M141.5 270v4M141.5 275v1M141.5 279v1M141.5 283v7M141.5 291v2M141.5 294v17M141.5 312v7M141.5 320v3M142.5 264v1M142.5 272v1M142.5 283v1M142.5 293v1M142.5 296v1M142.5 298v1M142.5 302v1M142.5 305v1M142.5 308v1M142.5 314v1M142.5 320v1M165.5 283v1M165.5 285v1M165.5 287v1M165.5 289v1M165.5 293v4M165.5 298v2M165.5 303v1M165.5 305v1M165.5 310v1M165.5 332v1M165.5 334v13M165.5 350v4M165.5 355v5M165.5 361v4M165.5 367v1M165.5 369v3M166.5 280v1M166.5 282v2M166.5 285v1M166.5 287v1M166.5 291v1M166.5 293v12M166.5 307v4M166.5 331v1M166.5 333v1M166.5 335v4M166.5 340v12M166.5 353v10M166.5 364v2M166.5 367v2M166.5 370v3M167.5 288v1M167.5 293v1M167.5 297v2M167.5 300v1M167.5 303v1M167.5 332v1M167.5 337v1M167.5 341v1M167.5 343v1M167.5 346v4M167.5 351v2M167.5 354v2M167.5 361v1M167.5 363v1M167.5 367v1M199.5 267v5M199.5 273v1M199.5 275v2M199.5 278v3M199.5 283v2M199.5 286v2M199.5 289v1M199.5 291v2M199.5 295v2M199.5 298v3M199.5 321v10M199.5 336v3M199.5 340v1M199.5 342v2M200.5 264v1M200.5 266v2M200.5 269v1M200.5 271v10M200.5 282v2M200.5 287v8M200.5 296v5M200.5 321v2M200.5 324v5M200.5 330v8M200.5 339v5M201.5 270v2M201.5 273v2M201.5 276v1M201.5 279v1M201.5 281v1M201.5 291v1M201.5 295v3M201.5 299v2M201.5 321v2M201.5 328v1M201.5 330v2M201.5 333v1M201.5 336v2M201.5 340v1M201.5 342v1M225.5 365v1M225.5 368v1M225.5 370v1M225.5 373v2M225.5 376v2M225.5 380v1M225.5 382v1M225.5 384v9M226.5 312v4M226.5 318v1M226.5 320v1M226.5 323v1M226.5 326v1M226.5 328v1M226.5 330v6M226.5 337v1M226.5 342v7M226.5 350v1M226.5 354v3M226.5 358v5M226.5 364v15M226.5 381v1M226.5 383v2M226.5 386v4M226.5 392v1M227.5 328v1M227.5 335v1M227.5 340v1M227.5 342v1M227.5 348v2M227.5 352v1M227.5 363v2M227.5 373v1M227.5 376v1M227.5 379v1M227.5 384v2M227.5 387v1M227.5 390v1M249.5 275v1M249.5 277v1M249.5 279v1M249.5 281v5M249.5 287v2M249.5 290v2M249.5 294v1M249.5 296v5M249.5 344v1M249.5 350v5M250.5 275v3M250.5 279v4M250.5 284v10M250.5 295v1M250.5 299v2M250.5 343v13M250.5 357v2M250.5 360v2M250.5 364v1M250.5 367v1M250.5 369v1M250.5 371v1M250.5 373v1M250.5 375v3M250.5 379v1M251.5 279v1M251.5 293v1M251.5 297v1M251.5 347v2M251.5 369v1M251.5 371v1M349.5 199v1M349.5 201v4M349.5 207v10M349.5 218v1M349.5 220v1M349.5 224v3M349.5 230v1M349.5 232v1M349.5 239v1M349.5 241v1M349.5 243v1M349.5 247v2M349.5 250v3M349.5 254v7M349.5 268v1M349.5 271v6M349.5 302v6M349.5 311v2M349.5 317v3M349.5 325v3M349.5 329v2M349.5 332v1M349.5 335v1M349.5 337v2M349.5 340v1M349.5 342v1M350.5 199v23M350.5 224v1M350.5 228v1M350.5 232v5M350.5 239v3M350.5 248v1M350.5 250v4M350.5 257v1M350.5 260v1M350.5 262v4M350.5 267v2M350.5 270v7M350.5 302v16M350.5 327v1M350.5 329v2M350.5 332v2M350.5 335v5M350.5 341v2M351.5 204v1M351.5 209v1M351.5 212v1M351.5 220v1M351.5 222v1M351.5 235v1M351.5 238v1M351.5 246v1M351.5 257v1M351.5 273v1M351.5 275v1M351.5 306v1M351.5 315v1M351.5 317v1M351.5 332v1M351.5 342v1M373.5 241v1M373.5 244v2M373.5 248v1M373.5 250v1M373.5 252v1M373.5 254v1M373.5 257v1M373.5 259v1M373.5 271v1M373.5 273v1M373.5 275v1M373.5 280v1M373.5 283v1M373.5 285v1M373.5 287v1M373.5 292v1M373.5 328v1M373.5 330v2M373.5 402v1M373.5 407v1M373.5 410v1M373.5 412v1M373.5 423v1M373.5 426v2M373.5 430v1M373.5 432v1M374.5 240v7M374.5 250v1M374.5 253v3M374.5 257v1M374.5 261v5M374.5 267v1M374.5 269v10M374.5 280v5M374.5 286v1M374.5 290v1M374.5 293v1M374.5 327v5M374.5 403v5M374.5 409v1M374.5 411v1M374.5 413v11M374.5 425v1M374.5 429v9M375.5 241v1M375.5 247v1M375.5 249v1M375.5 251v2M375.5 254v1M375.5 259v1M375.5 261v1M375.5 263v5M375.5 273v1M375.5 276v1M375.5 282v1M375.5 285v1M375.5 287v2M375.5 292v2M375.5 328v1M399.5 345v1M399.5 348v1M399.5 352v3M399.5 360v2M399.5 363v1M399.5 379v4M399.5 386v1M399.5 396v1M399.5 398v1M399.5 400v1M399.5 403v1M399.5 412v1M399.5 415v1M399.5 417v2M399.5 420v2M399.5 423v3M399.5 430v1M399.5 434v1M399.5 436v1M399.5 438v3M400.5 347v1M400.5 349v1M400.5 352v1M400.5 354v2M400.5 358v1M400.5 360v1M400.5 365v3M400.5 369v1M400.5 371v13M400.5 386v1M400.5 388v2M400.5 391v4M400.5 396v2M400.5 399v6M400.5 411v2M400.5 416v2M400.5 420v1M400.5 422v1M400.5 425v5M400.5 435v1M400.5 438v1M401.5 401v1M401.5 403v1M401.5 414v1M401.5 419v1M401.5 426v1M401.5 428v1M401.5 437v1M407.5 257v1M407.5 263v1M407.5 267v2M407.5 270v4M407.5 275v11M407.5 287v1M407.5 291v3M407.5 295v2M407.5 298v1M407.5 302v1M407.5 304v1M407.5 307v1M407.5 313v1M407.5 315v1M407.5 317v2M407.5 321v1M407.5 323v1M407.5 326v1M408.5 253v1M408.5 255v1M408.5 257v2M408.5 260v3M408.5 265v35M408.5 301v1M408.5 304v6M408.5 314v1M408.5 319v1M408.5 324v1M409.5 254v1M409.5 256v2M409.5 263v2M409.5 267v1M409.5 273v1M409.5 279v1M409.5 281v3M409.5 285v2M409.5 292v2M409.5 300v1M409.5 302v1M409.5 305v1M409.5 310v1M409.5 312v1M409.5 315v1M409.5 325v1M409.5 327v1M433.5 215v2M433.5 218v1M433.5 221v2M433.5 224v1M433.5 227v3M433.5 241v1M433.5 243v1M433.5 253v1M433.5 259v1M433.5 263v1M433.5 266v3M433.5 276v1M433.5 280v1M433.5 285v1M433.5 294v1M433.5 299v2M433.5 302v1M433.5 304v1M433.5 307v1M433.5 309v1M433.5 311v2M433.5 318v1M433.5 339v1M433.5 351v2M434.5 191v25M434.5 217v1M434.5 219v3M434.5 223v1M434.5 226v2M434.5 229v8M434.5 240v1M434.5 242v1M434.5 244v1M434.5 247v2M434.5 257v1M434.5 259v1M434.5 261v1M434.5 263v1M434.5 265v1M434.5 269v1M434.5 271v1M434.5 274v1M434.5 277v1M434.5 279v2M434.5 282v1M434.5 285v1M434.5 287v2M434.5 290v1M434.5 293v2M434.5 296v2M434.5 300v1M434.5 303v2M434.5 308v1M434.5 310v1M434.5 312v2M434.5 315v7M434.5 332v3M434.5 337v1M434.5 343v1M434.5 345v3M435.5 215v1M435.5 222v1M435.5 232v1M435.5 236v1M435.5 238v1M435.5 240v1M435.5 247v1M435.5 252v1M435.5 269v1M435.5 294v1M435.5 297v1M435.5 312v1M435.5 314v2M458.5 292v11M458.5 304v2M458.5 307v3M458.5 313v5M458.5 319v1M458.5 322v1M458.5 325v3M459.5 292v3M459.5 297v2M459.5 300v1M459.5 302v2M459.5 305v1M459.5 307v2M459.5 310v1M459.5 312v2M459.5 315v1M459.5 320v3M459.5 324v4M459.5 329v1M459.5 331v6M459.5 339v1M459.5 341v5M459.5 354v1M459.5 356v1M459.5 361v1M459.5 363v1M460.5 292v1M460.5 296v1M460.5 299v1M460.5 301v1M460.5 303v1M460.5 306v2M460.5 309v1M460.5 316v1M460.5 318v1M460.5 321v2M460.5 333v2M460.5 353v1M460.5 361v1M484.5 380v1M484.5 382v1M484.5 384v1M484.5 386v3M484.5 391v1M484.5 393v1M484.5 396v1M484.5 399v1M484.5 401v1M484.5 403v4M484.5 408v3M484.5 412v4M484.5 417v1M484.5 419v4M484.5 424v2M484.5 427v1M485.5 380v48M486.5 380v5M486.5 386v1M486.5 391v1M486.5 393v2M486.5 398v2M486.5 401v1M486.5 405v1M486.5 407v4M486.5 412v3M486.5 416v1M486.5 418v1M486.5 422v2M486.5 425v1M563.5 424v1M563.5 426v1M563.5 428v1M563.5 430v1M564.5 378v7M564.5 388v2M564.5 391v1M564.5 393v1M564.5 422v3M564.5 426v1M564.5 428v2M565.5 380v1M565.5 389v1M565.5 392v1M565.5 399v2M565.5 402v10M565.5 413v1M565.5 415v3M565.5 422v1M566.5 397v1M566.5 401v1M566.5 404v1M566.5 406v1M566.5 410v1M566.5 412v1M589.5 395v2M589.5 398v1M589.5 400v3M589.5 405v2M589.5 447v3M589.5 451v6M590.5 395v26M590.5 434v1M590.5 437v6M590.5 444v13M591.5 396v1M591.5 403v1M591.5 405v2M591.5 408v13M591.5 434v11M591.5 448v2M591.5 451v1M592.5 411v1M592.5 413v3M592.5 420v1M592.5 441v1M592.5 444v1M648.5 416v11M648.5 428v1M649.5 399v1M649.5 403v9M649.5 414v15M650.5 399v16M650.5 417v1M650.5 421v2M650.5 424v2M651.5 400v1M651.5 405v2M674.5 409v1M674.5 411v5M674.5 420v2M674.5 424v1M674.5 426v1M675.5 399v8M675.5 408v16M675.5 429v2M675.5 432v1M676.5 399v10M676.5 410v2M676.5 413v1M676.5 417v1M676.5 421v1M676.5 427v1M676.5 430v1M676.5 432v2M677.5 402v1M677.5 405v1M677.5 408v1M677.5 430v1M677.5 432v2M699.5 401v1M699.5 403v5M699.5 410v7M700.5 401v18M700.5 420v3M700.5 426v1M700.5 428v1M700.5 430v2M701.5 402v1M701.5 409v1M701.5 412v1M701.5 417v15M702.5 418v1M702.5 420v1M702.5 422v1M702.5 426v1"/>
<path stroke="#e07600" d="M117.5 202v1M117.5 204v1M117.5 207v1M117.5 209v2M117.5 212v4M117.5 218v1M117.5 220v1M117.5 223v1M117.5 226v1M117.5 228v1M117.5 230v1M117.5 232v3M117.5 236v1M117.5 239v1M117.5 241v1M117.5 243v2M117.5 246v1M117.5 248v2M117.5 252v1M117.5 258v1M117.5 264v3M118.5 202v21M118.5 224v3M118.5 228v1M118.5 230v1M118.5 232v3M118.5 237v12M118.5 250v9M118.5 261v1M118.5 264v3M118.5 268v3M118.5 276v1M119.5 203v1M119.5 209v1M119.5 214v2M119.5 217v2M119.5 221v1M119.5 231v1M119.5 235v1M119.5 239v1M119.5 243v1M119.5 245v1M119.5 255v1M119.5 261v1M119.5 263v1M142.5 267v2M142.5 275v1M142.5 277v1M142.5 280v3M142.5 284v2M142.5 287v2M142.5 290v3M142.5 294v1M142.5 299v1M142.5 301v1M142.5 303v2M142.5 307v1M142.5 310v4M143.5 269v3M143.5 273v1M143.5 277v2M143.5 280v4M143.5 286v8M143.5 295v4M143.5 300v7M143.5 308v9M144.5 267v1M144.5 272v1M144.5 285v1M144.5 290v2M144.5 293v1M144.5 295v2M144.5 300v1M144.5 304v1M144.5 306v1M144.5 308v3M144.5 312v2M168.5 236v3M168.5 240v7M168.5 249v1M168.5 251v2M168.5 254v2M168.5 258v2M168.5 261v1M168.5 263v1M168.5 265v1M168.5 269v1M168.5 274v2M168.5 346v1M168.5 350v3M168.5 354v6M168.5 361v1M168.5 363v2M169.5 236v8M169.5 245v3M169.5 250v4M169.5 255v4M169.5 260v11M169.5 272v4M169.5 278v4M169.5 326v9M169.5 337v1M169.5 339v1M169.5 341v4M169.5 346v7M169.5 354v1M169.5 356v9M170.5 238v3M170.5 252v3M170.5 256v1M170.5 261v2M170.5 273v1M170.5 338v1M170.5 344v1M170.5 356v1M170.5 360v1M202.5 256v2M202.5 259v1M202.5 265v1M202.5 271v1M202.5 273v1M202.5 280v1M202.5 284v1M202.5 286v3M202.5 290v5M202.5 297v1M202.5 299v2M202.5 302v3M202.5 306v1M202.5 309v1M202.5 313v2M202.5 322v2M202.5 325v1M202.5 327v2M202.5 330v1M202.5 342v1M202.5 346v1M202.5 348v1M202.5 350v1M203.5 256v3M203.5 260v1M203.5 262v2M203.5 265v14M203.5 282v10M203.5 293v2M203.5 296v16M203.5 313v1M203.5 317v1M203.5 319v6M203.5 326v1M203.5 329v4M203.5 334v1M203.5 336v1M203.5 339v1M203.5 341v2M203.5 344v1M203.5 351v1M204.5 259v3M204.5 265v1M204.5 268v3M204.5 272v3M204.5 281v1M204.5 287v1M204.5 289v2M204.5 292v1M204.5 299v2M204.5 303v1M204.5 317v1M204.5 319v2M204.5 322v1M204.5 331v2M204.5 347v1M227.5 255v1M227.5 257v1M227.5 259v2M227.5 262v3M227.5 266v5M227.5 272v2M227.5 275v5M227.5 281v7M227.5 289v2M227.5 293v1M227.5 295v1M228.5 251v1M228.5 255v4M228.5 260v1M228.5 268v1M228.5 270v2M228.5 274v3M228.5 278v2M228.5 282v1M228.5 285v2M228.5 297v1M228.5 301v1M228.5 303v1M228.5 311v1M228.5 319v2M228.5 323v1M228.5 329v1M228.5 331v1M228.5 333v1M229.5 272v1M229.5 280v2M229.5 284v1M229.5 289v1M229.5 291v1M229.5 295v1M229.5 328v1M229.5 330v1M251.5 271v7M251.5 280v3M251.5 285v2M251.5 288v5M251.5 294v1M251.5 296v1M251.5 298v1M251.5 300v1M251.5 302v1M251.5 305v2M252.5 271v1M252.5 273v5M252.5 279v7M252.5 287v5M252.5 293v4M252.5 299v1M252.5 302v2M252.5 305v4M252.5 311v1M252.5 313v1M252.5 315v3M252.5 324v6M252.5 331v1M252.5 333v2M252.5 336v1M252.5 338v2M252.5 341v2M252.5 344v1M252.5 346v1M252.5 348v1M252.5 350v1M252.5 352v1M253.5 272v1M253.5 274v1M253.5 277v3M253.5 283v1M253.5 285v2M253.5 291v2M253.5 294v1M253.5 296v2M253.5 300v2M253.5 306v1M253.5 309v2M253.5 324v1M253.5 330v1M253.5 338v2M253.5 341v1M253.5 348v1M253.5 351v1M326.5 348v1M326.5 352v1M326.5 356v1M326.5 370v2M327.5 347v1M327.5 350v1M327.5 353v1M327.5 355v1M327.5 359v2M327.5 362v6M327.5 369v1M327.5 371v1M327.5 373v1M327.5 375v2M327.5 378v1M327.5 381v1M327.5 383v12M327.5 396v2M327.5 399v1M327.5 401v7M327.5 409v4M327.5 418v19M328.5 382v2M328.5 390v1M328.5 395v1M328.5 397v1M328.5 405v1M328.5 408v1M328.5 412v3M328.5 416v1M328.5 420v2M351.5 199v2M351.5 203v1M351.5 205v1M351.5 207v1M351.5 211v1M351.5 213v1M351.5 215v3M351.5 224v2M351.5 228v2M351.5 237v1M351.5 241v1M351.5 244v1M351.5 247v2M351.5 252v3M351.5 262v1M351.5 264v2M351.5 270v3M351.5 274v1M351.5 278v1M351.5 283v2M351.5 286v1M351.5 288v1M351.5 290v1M351.5 295v1M351.5 305v1M351.5 307v4M351.5 314v1M351.5 321v1M351.5 324v1M351.5 326v4M351.5 331v1M351.5 338v3M351.5 346v1M351.5 349v2M351.5 354v1M352.5 199v2M352.5 206v1M352.5 208v1M352.5 210v5M352.5 216v2M352.5 219v5M352.5 226v1M352.5 228v1M352.5 230v1M352.5 232v1M352.5 235v1M352.5 245v2M352.5 250v1M352.5 252v1M352.5 256v1M352.5 258v3M352.5 262v3M352.5 266v1M352.5 269v1M352.5 271v3M352.5 280v3M352.5 291v1M352.5 296v1M352.5 305v2M352.5 308v7M352.5 316v10M352.5 327v3M352.5 333v1M352.5 335v8M352.5 344v2M352.5 347v2M352.5 350v1M352.5 354v3M353.5 208v1M353.5 210v2M353.5 215v1M353.5 218v1M353.5 221v1M353.5 227v1M353.5 233v1M353.5 236v1M353.5 253v1M353.5 256v2M353.5 272v1M353.5 274v2M353.5 278v1M353.5 282v1M353.5 284v1M353.5 290v1M353.5 292v3M353.5 297v1M353.5 305v1M353.5 308v2M353.5 311v6M353.5 318v1M353.5 321v1M353.5 327v1M353.5 331v1M353.5 335v1M353.5 340v2M353.5 343v5M353.5 353v1M376.5 222v15M376.5 238v1M376.5 240v2M376.5 245v1M376.5 248v2M376.5 251v5M376.5 259v1M376.5 261v1M376.5 265v1M376.5 270v1M376.5 274v2M376.5 277v8M376.5 286v3M376.5 290v2M376.5 294v1M376.5 359v2M376.5 362v1M376.5 364v1M376.5 367v3M376.5 372v6M376.5 379v2M376.5 385v1M376.5 387v3M377.5 230v7M377.5 238v1M377.5 240v1M377.5 242v1M377.5 244v1M377.5 252v4M377.5 258v2M377.5 261v1M377.5 263v3M377.5 267v1M377.5 269v2M377.5 272v1M377.5 274v21M377.5 361v8M377.5 371v2M377.5 378v3M377.5 382v1M377.5 384v2M377.5 388v2M378.5 230v2M378.5 233v4M378.5 244v1M378.5 248v2M378.5 265v1M378.5 267v1M378.5 270v1M378.5 274v6M378.5 281v2M378.5 284v1M378.5 288v1M378.5 294v1M378.5 372v1M378.5 374v1M378.5 378v1M378.5 381v2M378.5 388v1M378.5 390v3M401.5 410v1M401.5 412v2M401.5 415v1M401.5 417v1M401.5 420v1M401.5 422v1M401.5 424v1M401.5 429v1M401.5 431v4M401.5 438v2M401.5 441v3M401.5 445v1M401.5 447v5M402.5 410v1M402.5 412v1M402.5 416v2M402.5 419v1M402.5 421v2M402.5 424v6M402.5 431v4M402.5 437v11M402.5 450v1M402.5 452v1M403.5 413v1M403.5 420v1M403.5 422v1M403.5 424v2M403.5 428v1M403.5 441v1M403.5 443v2M403.5 449v1M403.5 453v1M410.5 268v2M410.5 271v1M410.5 275v2M410.5 278v2M410.5 281v5M410.5 288v1M410.5 291v1M410.5 293v12M410.5 306v2M410.5 309v1M410.5 311v1M410.5 316v2M410.5 330v1M411.5 268v46M411.5 315v3M411.5 319v1M411.5 321v1M411.5 327v1M411.5 332v1M412.5 270v1M412.5 272v1M412.5 287v1M412.5 289v1M412.5 298v1M412.5 302v1M412.5 307v1M412.5 319v2M412.5 332v1M435.5 263v1M435.5 266v1M435.5 271v6M435.5 279v5M435.5 285v3M435.5 289v1M435.5 291v3M435.5 296v1M435.5 298v1M435.5 301v1M435.5 304v1M435.5 306v4M435.5 311v1M435.5 316v1M435.5 318v1M435.5 320v2M435.5 323v6M435.5 331v1M436.5 260v35M436.5 296v8M436.5 305v1M436.5 307v1M436.5 309v1M436.5 312v2M436.5 316v4M436.5 322v6M436.5 329v1M436.5 331v1M437.5 271v2M437.5 277v3M437.5 281v1M437.5 283v2M437.5 286v1M437.5 297v1M437.5 304v2M437.5 307v2M437.5 310v1M437.5 318v1M437.5 321v1M437.5 323v1M437.5 327v1M437.5 331v1M461.5 284v5M461.5 291v2M461.5 296v2M461.5 299v3M461.5 303v4M461.5 309v9M461.5 319v1M461.5 324v1M461.5 326v2M461.5 332v1M461.5 334v2M461.5 337v2M461.5 340v2M462.5 281v3M462.5 285v1M462.5 287v3M462.5 291v1M462.5 293v3M462.5 297v1M462.5 301v1M462.5 305v1M462.5 307v12M462.5 320v4M462.5 325v7M462.5 333v9M463.5 283v1M463.5 285v1M463.5 291v4M463.5 297v1M463.5 302v1M463.5 304v1M463.5 312v1M463.5 319v2M463.5 323v3M463.5 328v1M463.5 330v4M463.5 335v1M463.5 337v1M463.5 341v1M566.5 365v4M566.5 370v8M566.5 380v1M566.5 386v2M566.5 389v1M567.5 364v3M567.5 368v9M567.5 380v1M567.5 383v1M567.5 385v6M567.5 392v1M567.5 395v2M567.5 398v3M567.5 402v1M567.5 406v3M568.5 366v1M568.5 370v2M568.5 376v1M568.5 378v1M568.5 380v3M568.5 389v9M568.5 401v1M568.5 403v3M568.5 407v1M569.5 401v1M592.5 373v7M592.5 385v1M592.5 388v1M592.5 390v10M592.5 430v9M593.5 371v4M593.5 376v1M593.5 378v1M593.5 383v1M593.5 385v1M593.5 390v2M593.5 393v1M593.5 401v2M593.5 405v3M593.5 410v2M593.5 413v7M593.5 421v9M593.5 439v8M594.5 408v2M594.5 414v1M594.5 418v1M617.5 445v1M617.5 447v5M618.5 439v3M618.5 444v7M618.5 473v5M619.5 439v6M619.5 467v3M619.5 471v1M619.5 477v1M620.5 439v1M620.5 469v1M625.5 407v3M625.5 412v3M625.5 416v1M625.5 418v3M625.5 423v3M625.5 427v1M625.5 430v1M626.5 384v1M626.5 386v1M626.5 388v5M626.5 394v4M626.5 399v32M627.5 383v24M627.5 413v1M627.5 415v1M627.5 417v2M627.5 429v1M628.5 406v1M652.5 390v13M653.5 377v14M653.5 402v1M654.5 377v1M654.5 380v1M676.5 381v1M676.5 383v1M676.5 385v1M676.5 393v2M677.5 381v18M677.5 404v1M677.5 410v1M677.5 416v1M678.5 399v18M702.5 430v5M702.5 436v5M703.5 420v1M703.5 422v25M704.5 420v11M704.5 446v5"/>
<path stroke="#66d000" d="M119.5 219v1M119.5 233v2M119.5 236v2M119.5 240v3M119.5 247v1M119.5 249v4M119.5 254v1M119.5 256v2M119.5 259v2M119.5 264v2M120.5 218v1M120.5 220v1M120.5 224v2M120.5 228v2M120.5 231v1M120.5 233v1M120.5 237v2M120.5 240v9M120.5 252v5M120.5 258v1M120.5 261v1M120.5 263v3M120.5 267v2M120.5 271v1M121.5 232v1M121.5 234v1M121.5 236v2M121.5 241v1M121.5 247v1M121.5 249v1M121.5 251v1M121.5 254v1M121.5 256v1M121.5 258v1M121.5 262v1M121.5 265v1M121.5 269v3M145.5 257v1M145.5 275v1M145.5 278v1M145.5 283v1M145.5 285v1M145.5 291v2M145.5 297v4M145.5 302v1M145.5 304v1M145.5 306v2M145.5 310v1M145.5 313v2M145.5 322v2M145.5 326v1M145.5 328v3M146.5 257v2M146.5 260v1M146.5 262v2M146.5 268v4M146.5 273v1M146.5 277v1M146.5 281v1M146.5 284v1M146.5 286v1M146.5 288v1M146.5 291v2M146.5 295v2M146.5 298v3M146.5 302v8M146.5 312v1M146.5 318v1M146.5 321v1M146.5 323v2M146.5 326v2M147.5 258v1M147.5 262v1M147.5 265v1M147.5 268v2M147.5 275v1M147.5 286v3M147.5 292v1M147.5 295v1M147.5 299v3M147.5 305v1M147.5 307v2M170.5 244v1M170.5 247v1M170.5 249v1M170.5 257v1M170.5 264v1M170.5 266v1M170.5 280v1M170.5 366v3M170.5 371v1M170.5 374v1M170.5 376v1M170.5 379v1M170.5 381v6M170.5 390v1M170.5 392v2M170.5 396v4M170.5 401v1M171.5 227v19M171.5 248v1M171.5 250v1M171.5 252v5M171.5 259v1M171.5 261v2M171.5 264v1M171.5 266v1M171.5 272v1M171.5 274v1M171.5 276v3M171.5 280v1M171.5 366v2M171.5 369v1M171.5 371v3M171.5 376v5M171.5 382v3M171.5 386v1M171.5 388v5M171.5 397v3M171.5 401v2M172.5 248v2M172.5 258v1M172.5 265v1M172.5 269v8M172.5 280v1M172.5 366v3M172.5 372v1M172.5 374v1M172.5 376v5M172.5 382v1M172.5 387v1M172.5 389v1M172.5 391v1M172.5 394v2M172.5 399v4M204.5 297v1M204.5 310v1M204.5 312v2M204.5 350v2M204.5 353v2M204.5 356v1M204.5 358v6M204.5 365v1M204.5 367v2M204.5 373v3M204.5 382v1M205.5 254v5M205.5 260v2M205.5 263v1M205.5 265v2M205.5 268v1M205.5 271v3M205.5 275v1M205.5 278v2M205.5 281v1M205.5 283v8M205.5 292v1M205.5 296v1M205.5 300v1M205.5 305v1M205.5 307v1M205.5 312v1M205.5 314v1M205.5 350v31M205.5 382v3M205.5 386v2M206.5 253v1M206.5 255v1M206.5 263v1M206.5 265v1M206.5 268v1M206.5 270v1M206.5 275v1M206.5 285v2M206.5 308v3M206.5 313v1M206.5 317v1M206.5 350v2M206.5 353v3M206.5 357v1M206.5 359v1M206.5 367v1M206.5 370v1M206.5 372v2M206.5 375v1M228.5 248v2M228.5 252v1M228.5 254v1M228.5 259v1M228.5 261v7M228.5 269v1M228.5 272v2M228.5 277v1M228.5 280v2M228.5 287v4M228.5 292v1M228.5 294v3M228.5 298v2M228.5 305v1M228.5 307v1M228.5 309v2M228.5 312v1M228.5 314v2M228.5 321v2M228.5 324v1M228.5 326v1M229.5 249v4M229.5 256v2M229.5 261v7M229.5 269v3M229.5 273v7M229.5 283v1M229.5 288v1M229.5 292v2M229.5 296v1M229.5 299v6M229.5 308v1M229.5 310v1M229.5 312v5M229.5 318v1M229.5 320v1M229.5 322v1M229.5 324v3M230.5 249v1M230.5 260v3M230.5 264v1M230.5 266v2M230.5 269v2M230.5 272v2M230.5 276v2M230.5 290v1M230.5 292v1M230.5 294v1M230.5 296v1M230.5 299v2M230.5 310v3M230.5 314v1M230.5 322v1M254.5 241v1M254.5 243v1M254.5 245v1M254.5 247v1M254.5 249v1M254.5 251v1M254.5 253v2M254.5 260v1M254.5 262v2M254.5 265v1M254.5 267v1M254.5 271v3M254.5 275v4M254.5 281v1M254.5 286v3M254.5 291v2M254.5 294v4M254.5 300v1M254.5 302v2M254.5 305v1M254.5 307v1M254.5 314v1M254.5 316v1M255.5 240v1M255.5 243v1M255.5 245v1M255.5 251v5M255.5 257v1M255.5 259v4M255.5 264v1M255.5 269v1M255.5 271v1M255.5 273v1M255.5 277v1M255.5 279v1M255.5 281v1M255.5 286v2M255.5 289v3M255.5 293v1M255.5 295v2M255.5 298v7M255.5 307v6M255.5 314v3M256.5 241v1M256.5 253v1M256.5 262v1M256.5 273v1M256.5 275v1M256.5 280v2M256.5 290v1M256.5 298v3M256.5 306v1M256.5 311v1M328.5 298v1M328.5 303v1M328.5 305v1M328.5 307v1M328.5 309v3M328.5 315v1M328.5 317v1M328.5 327v1M328.5 329v12M328.5 342v2M329.5 297v5M329.5 307v2M329.5 310v1M329.5 312v1M329.5 314v1M329.5 319v1M329.5 321v2M329.5 325v5M329.5 332v5M329.5 338v1M329.5 341v2M329.5 344v1M329.5 347v1M329.5 351v1M329.5 353v1M329.5 355v1M329.5 357v1M329.5 367v1M329.5 369v3M329.5 373v1M329.5 375v1M329.5 377v3M329.5 383v1M329.5 386v1M329.5 388v1M330.5 306v1M330.5 309v1M330.5 313v1M330.5 318v7M330.5 329v2M330.5 342v1M330.5 347v1M330.5 349v1M330.5 359v1M330.5 361v1M330.5 364v1M330.5 367v1M354.5 245v1M354.5 247v5M354.5 253v2M354.5 259v1M354.5 262v4M354.5 267v4M354.5 273v8M354.5 283v2M354.5 286v6M354.5 295v1M354.5 329v2M354.5 335v1M354.5 337v1M354.5 339v1M355.5 245v5M355.5 251v5M355.5 258v1M355.5 260v1M355.5 262v6M355.5 269v1M355.5 272v11M355.5 284v2M355.5 287v6M355.5 296v1M355.5 327v1M355.5 329v1M355.5 331v1M355.5 334v1M355.5 336v4M355.5 345v5M355.5 351v7M355.5 359v3M355.5 363v1M355.5 365v6M356.5 245v1M356.5 249v1M356.5 253v1M356.5 257v1M356.5 265v1M356.5 270v4M356.5 281v2M356.5 286v1M356.5 288v1M356.5 290v2M356.5 344v1M356.5 346v1M356.5 348v1M356.5 352v1M356.5 362v5M379.5 256v1M379.5 258v2M379.5 261v3M379.5 266v1M379.5 269v2M379.5 272v1M379.5 274v4M379.5 280v1M379.5 284v2M379.5 376v1M379.5 378v1M379.5 380v1M379.5 382v1M379.5 384v5M379.5 390v4M380.5 226v1M380.5 230v1M380.5 232v1M380.5 239v1M380.5 242v1M380.5 247v1M380.5 250v5M380.5 256v5M380.5 262v1M380.5 264v7M380.5 272v2M380.5 276v10M380.5 376v23M380.5 400v8M381.5 234v1M381.5 236v1M381.5 252v1M381.5 254v2M381.5 263v4M381.5 270v1M381.5 272v1M381.5 278v1M381.5 280v1M381.5 282v1M381.5 284v1M381.5 378v1M381.5 380v1M381.5 382v1M381.5 384v1M381.5 386v1M381.5 390v2M381.5 396v5M381.5 405v1M404.5 427v1M404.5 430v1M404.5 432v2M404.5 436v1M404.5 445v3M404.5 449v1M404.5 452v1M405.5 427v27M405.5 455v1M405.5 458v1M405.5 460v1M405.5 465v1M405.5 472v1M405.5 474v9M406.5 427v1M406.5 429v1M406.5 431v1M406.5 435v1M406.5 437v2M406.5 440v1M406.5 442v2M406.5 448v2M406.5 451v1M406.5 455v1M406.5 457v1M406.5 460v7M406.5 473v1M412.5 237v1M412.5 242v1M412.5 266v2M412.5 269v1M412.5 271v1M412.5 273v4M412.5 278v2M412.5 281v1M412.5 283v1M412.5 288v1M412.5 290v3M412.5 295v3M413.5 211v26M413.5 239v1M413.5 243v1M413.5 248v16M413.5 265v1M413.5 267v2M413.5 270v5M413.5 276v10M413.5 287v1M413.5 291v3M413.5 295v4M413.5 300v1M413.5 302v2M413.5 305v2M413.5 311v1M414.5 211v1M414.5 213v1M414.5 215v1M414.5 218v1M414.5 220v1M414.5 236v1M414.5 238v1M414.5 266v1M414.5 268v1M414.5 281v1M414.5 285v2M414.5 289v2M414.5 292v3M414.5 299v1M414.5 310v2M438.5 285v1M438.5 287v1M438.5 289v1M438.5 292v2M438.5 295v3M438.5 305v6M438.5 315v1M438.5 319v2M438.5 325v1M438.5 328v1M438.5 332v1M438.5 334v3M438.5 339v6M438.5 348v1M438.5 350v1M438.5 352v1M438.5 354v1M438.5 360v2M438.5 365v1M438.5 368v1M438.5 372v1M438.5 375v2M438.5 382v1M439.5 285v2M439.5 288v1M439.5 290v3M439.5 295v3M439.5 299v1M439.5 303v8M439.5 314v11M439.5 326v11M439.5 338v2M439.5 341v4M439.5 347v3M439.5 356v5M439.5 362v4M439.5 367v1M439.5 369v5M439.5 375v2M439.5 378v1M440.5 293v1M440.5 295v1M440.5 298v1M440.5 301v2M440.5 304v1M440.5 309v1M440.5 317v1M440.5 326v3M440.5 330v1M440.5 334v2M440.5 338v3M463.5 258v1M463.5 260v11M464.5 260v1M464.5 263v1M464.5 267v1M464.5 269v2M464.5 274v2M464.5 279v1M464.5 281v6M464.5 288v7M464.5 296v1M464.5 300v1M464.5 303v1M464.5 305v1M464.5 307v1M464.5 309v3M464.5 313v1M464.5 315v5M464.5 321v1M464.5 323v5M465.5 270v3M465.5 276v7M465.5 284v1M465.5 288v4M465.5 293v3M465.5 297v1M465.5 299v1M465.5 301v5M465.5 307v1M465.5 310v1M465.5 313v1M465.5 315v4M465.5 322v1M465.5 324v1M465.5 326v2M465.5 329v3M465.5 334v1M465.5 336v4M465.5 342v3M465.5 346v4M465.5 356v1M465.5 359v1M465.5 361v1M465.5 363v1M466.5 271v1M466.5 274v2M466.5 277v1M466.5 285v3M466.5 291v1M466.5 295v1M466.5 299v1M466.5 312v1M466.5 315v1M466.5 324v1M466.5 326v1M466.5 347v2M466.5 350v1M466.5 363v1M569.5 394v7M569.5 403v1M569.5 405v1M569.5 409v2M569.5 412v1M569.5 414v1M569.5 416v1M570.5 372v4M570.5 380v4M570.5 385v2M570.5 388v3M570.5 392v1M570.5 399v3M570.5 410v4M570.5 415v1M571.5 373v2M571.5 377v1M571.5 379v1M571.5 381v1M571.5 390v1M593.5 351v9M594.5 342v9M594.5 359v4M594.5 364v5M594.5 421v4M595.5 359v19M595.5 379v2M595.5 404v1M595.5 409v3M595.5 413v1M595.5 415v7M595.5 423v2M595.5 426v1M596.5 370v11M596.5 404v1M596.5 406v9M597.5 370v1M597.5 407v1M597.5 409v1M597.5 411v1M619.5 446v8M619.5 482v2M619.5 485v1M619.5 487v3M620.5 440v15M620.5 473v1M620.5 478v1M620.5 480v4M620.5 485v7M621.5 438v10M621.5 451v3M621.5 473v3M621.5 477v5M622.5 439v1M622.5 441v1M622.5 443v3M628.5 387v1M628.5 389v11M628.5 401v1M629.5 387v23M629.5 412v6M630.5 391v1M630.5 401v1M630.5 403v15M631.5 403v2M631.5 406v2M631.5 415v2M653.5 355v9M653.5 391v1M653.5 393v9M653.5 403v1M653.5 405v3M654.5 355v18M654.5 375v2M654.5 379v1M654.5 381v5M654.5 390v19M655.5 356v1M655.5 364v27M655.5 393v1M655.5 406v1M655.5 408v1M656.5 388v1M679.5 421v6M680.5 382v8M680.5 414v14M681.5 386v1M681.5 390v7M681.5 414v7M682.5 390v2M682.5 415v1M682.5 418v1M704.5 451v1M704.5 454v5M704.5 460v1M704.5 462v1M704.5 464v1M705.5 439v1M705.5 441v2M705.5 444v3M705.5 448v17M706.5 438v16M706.5 456v1M706.5 458v1M706.5 463v1M707.5 441v1M707.5 448v3"/>
<path stroke="#bf6000" d="M122.5 213v4M122.5 218v3M122.5 222v7M122.5 281v1M122.5 284v1M122.5 286v1M122.5 290v1M122.5 294v1M122.5 296v1M122.5 300v1M123.5 208v2M123.5 213v16M123.5 270v3M123.5 275v1M123.5 277v1M123.5 283v2M123.5 286v2M123.5 291v2M123.5 294v5M123.5 300v2M124.5 205v1M124.5 209v1M124.5 215v2M124.5 218v1M124.5 222v2M124.5 272v1M124.5 274v1M124.5 282v1M124.5 295v1M124.5 297v1M124.5 299v1M147.5 304v1M147.5 306v1M147.5 309v1M147.5 311v4M147.5 318v10M147.5 329v1M147.5 331v2M147.5 334v1M147.5 336v1M147.5 343v1M147.5 351v2M147.5 359v3M147.5 364v2M147.5 369v2M147.5 375v3M147.5 379v4M147.5 384v1M148.5 253v4M148.5 261v2M148.5 264v2M148.5 269v1M148.5 271v1M148.5 273v1M148.5 279v1M148.5 282v1M148.5 288v4M148.5 304v3M148.5 308v2M148.5 313v12M148.5 326v4M148.5 331v1M148.5 333v2M148.5 336v1M148.5 342v1M148.5 346v1M148.5 348v5M148.5 354v1M148.5 356v1M148.5 358v9M148.5 368v2M148.5 371v1M148.5 376v5M148.5 382v2M149.5 252v1M149.5 277v1M149.5 279v1M149.5 283v3M149.5 290v1M149.5 310v1M149.5 313v3M149.5 317v6M149.5 325v1M149.5 327v1M149.5 329v1M149.5 331v1M149.5 335v1M149.5 342v1M149.5 346v2M149.5 352v2M149.5 355v2M149.5 358v2M149.5 364v1M149.5 366v1M149.5 373v2M149.5 376v3M149.5 381v2M149.5 384v1M173.5 277v1M173.5 279v1M173.5 281v2M173.5 290v2M173.5 333v3M173.5 337v2M173.5 340v4M173.5 345v4M173.5 350v1M173.5 352v1M173.5 354v2M173.5 357v7M173.5 380v2M173.5 383v1M173.5 385v1M173.5 387v2M173.5 390v2M173.5 399v3M173.5 403v1M173.5 408v1M174.5 277v3M174.5 281v3M174.5 285v2M174.5 288v1M174.5 290v3M174.5 295v1M174.5 297v2M174.5 307v1M174.5 309v1M174.5 317v1M174.5 319v1M174.5 321v2M174.5 325v2M174.5 328v6M174.5 335v6M174.5 342v5M174.5 348v2M174.5 351v1M174.5 353v1M174.5 355v1M174.5 357v5M174.5 363v1M174.5 381v11M174.5 393v1M174.5 395v15M175.5 296v1M175.5 305v1M175.5 318v1M175.5 324v1M175.5 327v1M175.5 333v1M175.5 343v4M175.5 352v2M175.5 382v1M175.5 384v1M175.5 395v2M175.5 409v1M207.5 287v1M207.5 294v1M207.5 297v1M207.5 310v1M207.5 313v4M207.5 319v3M207.5 325v2M207.5 328v7M207.5 336v1M207.5 339v4M207.5 344v4M207.5 349v2M207.5 353v1M207.5 355v4M208.5 287v3M208.5 293v1M208.5 295v1M208.5 300v2M208.5 304v1M208.5 306v1M208.5 308v3M208.5 312v3M208.5 317v3M208.5 325v2M208.5 328v14M208.5 345v6M208.5 353v4M208.5 358v1M209.5 289v1M209.5 311v1M209.5 315v2M209.5 322v1M209.5 326v4M209.5 331v1M209.5 333v1M209.5 335v1M209.5 338v3M209.5 343v1M209.5 346v1M209.5 352v1M209.5 355v1M209.5 358v1M231.5 234v3M231.5 238v1M231.5 243v7M231.5 253v1M231.5 258v6M231.5 265v1M231.5 267v1M231.5 274v2M232.5 234v4M232.5 241v4M232.5 246v1M232.5 248v3M232.5 252v4M232.5 257v2M232.5 260v6M232.5 267v7M232.5 276v2M233.5 233v1M233.5 235v1M233.5 239v1M233.5 244v4M233.5 249v1M233.5 251v2M233.5 256v1M233.5 259v1M233.5 264v1M233.5 267v1M233.5 269v1M233.5 272v4M257.5 205v20M257.5 226v1M257.5 229v1M257.5 231v4M257.5 236v2M257.5 240v3M257.5 245v1M257.5 274v1M257.5 277v1M257.5 281v1M257.5 283v1M257.5 285v1M257.5 287v1M257.5 291v2M257.5 295v1M257.5 298v3M257.5 302v1M257.5 305v2M257.5 308v10M258.5 222v25M258.5 274v6M258.5 281v2M258.5 284v2M258.5 287v7M258.5 303v8M258.5 312v1M258.5 314v3M259.5 230v3M259.5 234v3M259.5 238v1M259.5 240v1M259.5 242v1M259.5 276v1M259.5 280v1M259.5 282v1M259.5 285v1M259.5 287v3M259.5 302v1M259.5 304v1M259.5 309v1M259.5 314v3M331.5 292v1M331.5 294v1M331.5 298v1M331.5 308v1M331.5 311v1M331.5 315v1M331.5 318v4M331.5 324v1M331.5 329v1M331.5 332v1M331.5 336v1M331.5 340v3M332.5 290v2M332.5 293v2M332.5 296v3M332.5 301v2M332.5 304v1M332.5 308v1M332.5 310v4M332.5 315v1M332.5 317v1M332.5 321v1M332.5 323v1M332.5 325v2M332.5 329v1M332.5 331v7M332.5 339v2M332.5 342v2M333.5 291v3M333.5 295v2M333.5 298v2M333.5 304v1M333.5 306v1M333.5 308v1M333.5 310v1M333.5 312v1M333.5 316v1M333.5 320v1M333.5 325v1M333.5 331v1M333.5 333v1M333.5 335v1M333.5 337v2M333.5 340v3M357.5 257v5M357.5 265v1M357.5 292v3M357.5 296v1M357.5 299v2M357.5 304v4M357.5 309v1M357.5 312v1M357.5 314v2M357.5 317v1M357.5 320v2M357.5 324v1M357.5 327v1M357.5 329v1M357.5 331v2M357.5 334v1M357.5 337v1M357.5 339v2M357.5 344v1M357.5 346v1M358.5 257v9M358.5 292v14M358.5 307v2M358.5 310v10M358.5 321v1M358.5 323v4M358.5 328v3M358.5 333v1M358.5 335v1M358.5 343v1M358.5 347v2M358.5 350v2M358.5 353v1M359.5 292v1M359.5 297v1M359.5 300v1M359.5 309v2M359.5 322v1M359.5 324v2M359.5 327v1M359.5 337v1M359.5 341v1M359.5 350v1M381.5 310v3M381.5 314v3M381.5 318v1M381.5 322v1M381.5 324v1M381.5 344v1M381.5 351v1M381.5 354v2M381.5 357v1M381.5 368v1M381.5 371v1M381.5 383v1M381.5 395v1M382.5 285v3M382.5 291v4M382.5 300v3M382.5 304v12M382.5 317v1M382.5 319v1M382.5 322v1M382.5 324v1M382.5 330v1M382.5 345v1M382.5 349v2M382.5 353v1M382.5 355v2M382.5 358v5M382.5 364v1M382.5 370v1M382.5 372v1M382.5 376v3M382.5 380v2M382.5 383v1M382.5 385v1M382.5 387v3M382.5 391v1M382.5 397v1M383.5 286v2M383.5 300v4M383.5 306v1M383.5 308v1M383.5 312v4M415.5 272v1M415.5 274v1M415.5 277v4M415.5 284v1M415.5 286v4M415.5 295v2M415.5 303v2M415.5 314v1M415.5 322v3M415.5 328v1M415.5 330v1M415.5 333v2M416.5 254v44M416.5 304v2M416.5 307v2M416.5 310v3M416.5 316v1M416.5 319v1M416.5 325v2M416.5 328v3M416.5 333v2M417.5 272v1M417.5 276v3M417.5 281v2M417.5 284v6M417.5 332v1M441.5 347v6M441.5 354v1M441.5 356v4M441.5 361v3M441.5 365v1M441.5 367v1M441.5 372v1M441.5 377v4M441.5 395v2M441.5 398v5M441.5 404v2M442.5 346v13M442.5 361v5M442.5 368v4M442.5 373v1M442.5 381v5M442.5 389v6M442.5 401v3M442.5 405v1M442.5 407v3M443.5 360v1M443.5 367v2M443.5 399v1M443.5 402v1M443.5 405v2M466.5 328v2M466.5 331v1M466.5 333v9M466.5 343v1M466.5 356v1M466.5 381v1M466.5 383v1M466.5 385v1M466.5 391v3M467.5 311v1M467.5 314v1M467.5 316v1M467.5 327v17M467.5 347v2M467.5 351v1M467.5 353v2M467.5 358v6M467.5 367v1M467.5 369v5M467.5 376v1M467.5 378v1M467.5 381v13M468.5 311v2M468.5 316v1M468.5 335v2M468.5 338v1M468.5 341v1M468.5 343v1M468.5 383v1M545.5 413v6M545.5 420v8M546.5 412v21M546.5 436v3M546.5 440v1M546.5 442v10M547.5 422v1M547.5 424v1M547.5 428v15M547.5 452v10M548.5 432v1M548.5 438v2M548.5 441v1M571.5 386v4M571.5 396v1M571.5 399v7M571.5 426v1M571.5 428v1M571.5 430v1M571.5 432v1M572.5 386v24M572.5 411v6M572.5 418v4M572.5 423v4M572.5 430v3M573.5 394v1M573.5 407v20M574.5 410v1M574.5 414v1M574.5 425v2M596.5 392v3M596.5 396v3M596.5 430v2M596.5 433v1M597.5 383v4M597.5 388v11M597.5 420v2M597.5 423v4M597.5 428v2M597.5 431v2M597.5 434v10M598.5 383v8M598.5 397v1M598.5 420v7M598.5 434v1M599.5 387v1M599.5 422v1M599.5 426v2M630.5 386v1M630.5 388v3M630.5 392v1M630.5 394v6M631.5 371v1M631.5 374v1M631.5 376v1M631.5 379v4M631.5 384v17M632.5 371v15M632.5 390v1M632.5 396v1M633.5 371v3M633.5 375v1M633.5 383v1M656.5 365v3M656.5 369v1M656.5 372v2M656.5 375v1M656.5 378v1M656.5 394v1M656.5 398v3M656.5 402v1M656.5 404v1M656.5 406v3M657.5 349v6M657.5 357v1M657.5 361v1M657.5 363v16M657.5 394v20M657.5 415v1M657.5 417v6M658.5 349v15M658.5 366v1M658.5 372v1M658.5 394v1M658.5 400v1M658.5 402v1M658.5 406v1M658.5 409v14M659.5 353v1M659.5 357v2M659.5 361v1M659.5 421v1M681.5 399v5M681.5 405v1M682.5 393v3M682.5 398v9M682.5 429v10M683.5 392v7M683.5 402v1M683.5 420v9"/>
<path stroke="#0090a0" d="M124.5 220v2M124.5 224v6M124.5 234v3M124.5 239v1M124.5 241v1M124.5 245v3M124.5 249v9M124.5 259v3M124.5 265v3M124.5 271v1M124.5 273v1M124.5 278v4M124.5 283v7M124.5 293v2M124.5 296v1M124.5 298v1M124.5 300v1M124.5 304v1M124.5 308v1M125.5 220v1M125.5 224v1M125.5 226v2M125.5 229v1M125.5 233v4M125.5 238v4M125.5 245v1M125.5 248v1M125.5 250v3M125.5 254v1M125.5 257v2M125.5 260v2M125.5 263v1M125.5 272v1M125.5 274v1M125.5 276v6M125.5 283v13M125.5 301v1M125.5 305v1M125.5 307v1M125.5 309v1M125.5 311v1M125.5 313v1M126.5 224v1M126.5 226v1M126.5 230v1M126.5 234v7M126.5 245v1M126.5 249v1M126.5 254v1M126.5 257v1M126.5 260v2M126.5 267v1M126.5 276v4M126.5 284v1M126.5 289v1M126.5 292v1M126.5 294v1M126.5 297v5M150.5 260v1M150.5 263v1M150.5 265v1M150.5 268v2M150.5 274v1M150.5 277v1M150.5 280v2M150.5 284v2M150.5 289v1M150.5 291v5M150.5 297v1M150.5 299v1M150.5 301v5M150.5 308v1M150.5 310v3M150.5 315v1M150.5 317v1M150.5 319v1M150.5 322v2M150.5 339v1M150.5 355v1M151.5 255v2M151.5 258v1M151.5 262v1M151.5 265v1M151.5 267v1M151.5 270v5M151.5 277v7M151.5 285v1M151.5 287v7M151.5 295v1M151.5 297v6M151.5 304v1M151.5 306v3M151.5 310v1M151.5 312v1M151.5 314v1M151.5 316v1M151.5 318v3M151.5 322v1M151.5 325v1M151.5 329v1M151.5 332v2M151.5 335v1M151.5 337v6M151.5 344v1M151.5 348v3M151.5 356v2M152.5 259v2M152.5 262v2M152.5 271v2M152.5 279v1M152.5 281v1M152.5 283v1M152.5 285v1M152.5 288v2M152.5 292v1M152.5 312v1M152.5 315v2M152.5 320v1M152.5 331v1M152.5 334v1M152.5 342v1M152.5 355v3M175.5 313v1M175.5 315v2M175.5 326v1M175.5 328v1M175.5 330v1M175.5 332v1M175.5 335v3M175.5 339v1M175.5 347v1M175.5 355v4M175.5 372v1M175.5 385v1M175.5 387v1M175.5 389v1M175.5 397v10M175.5 410v6M175.5 419v1M176.5 310v6M176.5 317v1M176.5 322v2M176.5 327v2M176.5 332v2M176.5 336v1M176.5 338v1M176.5 341v3M176.5 345v3M176.5 349v1M176.5 351v1M176.5 354v1M176.5 356v2M176.5 361v2M176.5 367v1M176.5 369v1M176.5 372v3M176.5 377v1M176.5 381v1M176.5 390v1M176.5 392v1M176.5 394v1M176.5 399v14M176.5 415v1M177.5 311v3M177.5 315v1M177.5 401v1M177.5 409v1M177.5 412v1M177.5 416v2M209.5 277v4M209.5 282v5M209.5 291v3M209.5 295v1M209.5 297v6M209.5 304v7M210.5 274v37M211.5 278v1M211.5 280v1M211.5 285v1M211.5 287v2M211.5 293v4M211.5 305v1M211.5 307v4M234.5 216v1M234.5 218v2M234.5 221v1M234.5 225v11M234.5 239v1M234.5 241v4M234.5 246v1M234.5 249v2M234.5 252v4M234.5 257v2M234.5 260v9M234.5 270v2M234.5 273v1M234.5 276v2M235.5 218v1M235.5 220v14M235.5 237v4M235.5 244v12M235.5 257v1M235.5 259v17M235.5 277v1M236.5 217v2M236.5 220v1M236.5 222v1M236.5 225v3M236.5 232v4M236.5 237v2M236.5 243v3M236.5 247v2M236.5 264v1M236.5 275v1M236.5 277v1M259.5 259v1M259.5 261v1M259.5 263v1M259.5 265v1M259.5 269v1M259.5 271v2M259.5 277v2M259.5 284v1M259.5 286v1M259.5 292v3M259.5 296v4M259.5 301v1M259.5 306v3M259.5 310v2M259.5 313v1M259.5 317v1M259.5 319v1M259.5 321v1M259.5 323v1M259.5 325v1M259.5 327v2M259.5 330v1M260.5 252v1M260.5 254v1M260.5 256v2M260.5 259v1M260.5 261v1M260.5 264v4M260.5 272v1M260.5 275v3M260.5 279v1M260.5 285v1M260.5 287v1M260.5 290v1M260.5 294v2M260.5 297v2M260.5 300v4M260.5 306v1M260.5 308v2M260.5 314v1M260.5 316v3M260.5 320v2M260.5 323v3M260.5 327v2M260.5 330v3M261.5 252v1M261.5 254v1M261.5 256v1M261.5 260v1M261.5 266v1M261.5 270v1M261.5 272v2M261.5 287v1M261.5 289v1M261.5 307v2M261.5 315v1M261.5 322v1M261.5 327v1M261.5 332v2M334.5 269v1M334.5 271v1M334.5 278v1M334.5 281v1M334.5 285v2M334.5 290v3M334.5 294v2M334.5 297v1M334.5 299v1M334.5 301v3M334.5 307v6M334.5 315v2M334.5 318v3M334.5 322v1M334.5 324v4M334.5 329v1M334.5 331v2M334.5 334v1M334.5 336v1M334.5 340v1M335.5 268v1M335.5 270v5M335.5 276v2M335.5 279v1M335.5 284v2M335.5 287v1M335.5 295v6M335.5 303v1M335.5 305v1M335.5 309v1M335.5 311v1M335.5 313v4M335.5 319v7M335.5 327v1M335.5 329v1M335.5 331v8M335.5 340v1M335.5 342v2M336.5 288v1M336.5 292v2M336.5 295v1M336.5 315v2M336.5 321v1M336.5 330v1M336.5 332v1M336.5 335v1M336.5 341v2M359.5 257v6M359.5 264v2M359.5 271v3M359.5 278v1M359.5 280v2M359.5 283v6M359.5 291v1M359.5 293v4M359.5 301v8M359.5 312v4M359.5 320v1M359.5 323v1M359.5 331v2M359.5 334v1M359.5 336v1M359.5 340v1M359.5 343v1M359.5 351v1M359.5 359v1M360.5 257v9M360.5 274v1M360.5 276v3M360.5 280v1M360.5 282v1M360.5 287v10M360.5 298v6M360.5 305v1M360.5 307v5M360.5 314v1M360.5 316v1M360.5 318v1M360.5 320v1M360.5 322v1M360.5 324v1M360.5 327v1M360.5 330v1M360.5 334v4M360.5 342v3M360.5 351v8M360.5 360v1M361.5 257v1M361.5 259v1M361.5 263v2M361.5 270v1M361.5 279v2M361.5 286v1M361.5 288v1M361.5 290v1M361.5 294v2M361.5 303v1M361.5 305v1M361.5 308v2M361.5 312v1M361.5 322v2M361.5 338v1M361.5 340v1M361.5 349v2M361.5 357v1M384.5 239v4M384.5 246v1M384.5 248v3M384.5 252v3M384.5 256v1M384.5 258v1M384.5 261v1M384.5 284v1M384.5 293v1M384.5 295v4M384.5 300v2M384.5 307v2M384.5 310v1M384.5 313v6M384.5 374v1M384.5 390v1M384.5 392v1M384.5 394v7M384.5 403v2M385.5 237v2M385.5 240v7M385.5 248v14M385.5 274v3M385.5 282v1M385.5 286v1M385.5 289v1M385.5 291v1M385.5 294v1M385.5 297v1M385.5 299v1M385.5 301v2M385.5 304v2M385.5 307v12M385.5 376v7M385.5 384v3M385.5 388v1M385.5 391v4M385.5 396v4M385.5 401v4M386.5 238v1M386.5 241v1M386.5 247v3M386.5 254v1M386.5 257v2M386.5 279v1M386.5 281v1M386.5 283v2M386.5 286v1M386.5 310v1M386.5 312v3M386.5 317v1M386.5 383v1M386.5 391v2M386.5 397v1M386.5 399v1M386.5 403v2M418.5 283v2M418.5 286v2M418.5 290v1M418.5 292v3M418.5 297v5M418.5 305v2M418.5 308v5M418.5 314v5M418.5 320v3M418.5 324v4M418.5 331v1M418.5 333v4M419.5 276v2M419.5 279v2M419.5 282v1M419.5 284v1M419.5 286v1M419.5 289v1M419.5 292v4M419.5 299v1M419.5 302v1M419.5 304v1M419.5 306v1M419.5 310v3M419.5 315v4M419.5 320v18M420.5 290v1M420.5 295v1M420.5 297v1M420.5 300v1M420.5 303v1M420.5 306v1M420.5 308v3M420.5 320v1M420.5 323v1M420.5 325v1M420.5 328v2M420.5 335v2M443.5 336v1M443.5 341v1M443.5 349v1M443.5 352v3M443.5 356v4M443.5 364v3M443.5 372v2M443.5 375v1M443.5 377v1M443.5 379v1M443.5 381v4M443.5 386v2M443.5 390v1M443.5 401v1M443.5 403v1M443.5 407v1M443.5 409v6M443.5 417v3M443.5 421v2M443.5 425v1M443.5 428v2M443.5 431v1M443.5 434v1M444.5 334v1M444.5 336v3M444.5 340v1M444.5 343v1M444.5 347v3M444.5 352v4M444.5 360v3M444.5 368v1M444.5 378v1M444.5 380v1M444.5 382v6M444.5 389v1M444.5 401v8M444.5 410v8M444.5 419v1M444.5 421v2M444.5 425v1M444.5 427v1M444.5 431v14M445.5 355v1M445.5 357v1M445.5 359v1M445.5 366v3M445.5 376v1M445.5 379v2M445.5 404v1M445.5 406v1M445.5 409v2M445.5 417v2M445.5 425v1M445.5 429v4M445.5 434v1M469.5 301v1M469.5 303v2M469.5 306v3M469.5 310v1M469.5 312v3M469.5 316v1M469.5 318v1M469.5 320v4M469.5 325v1M469.5 327v1M469.5 329v1M469.5 333v1M469.5 336v3M469.5 343v1M469.5 349v1M469.5 354v2M469.5 358v3M469.5 362v2M469.5 365v1M469.5 369v1M470.5 300v1M470.5 303v2M470.5 306v2M470.5 311v9M470.5 324v4M470.5 330v2M470.5 333v1M470.5 335v3M470.5 339v7M470.5 350v1M470.5 357v1M470.5 359v1M470.5 362v1M470.5 364v1M470.5 372v1M471.5 315v1M471.5 322v1M471.5 325v1M471.5 327v1M471.5 335v2M471.5 338v1M471.5 343v1M548.5 364v6M548.5 371v1M548.5 413v1M548.5 415v2M548.5 418v4M548.5 423v1M548.5 425v1M548.5 427v5M549.5 357v2M549.5 363v4M549.5 368v1M549.5 370v2M549.5 374v2M549.5 378v1M549.5 383v1M549.5 395v2M549.5 398v34M550.5 358v3M550.5 362v1M550.5 366v2M550.5 371v1M550.5 384v3M550.5 390v1M550.5 392v24M550.5 417v1M550.5 422v1M550.5 426v1M550.5 429v2M551.5 358v1M551.5 397v1M551.5 402v1M551.5 408v1M551.5 410v1M551.5 412v1M573.5 378v1M573.5 386v3M574.5 374v16M574.5 391v2M574.5 397v1M574.5 400v1M574.5 403v1M575.5 390v1M575.5 392v9M575.5 402v3M599.5 382v1M599.5 396v1M599.5 398v1M599.5 400v1M599.5 402v1M599.5 433v2M599.5 436v4M600.5 370v1M600.5 372v1M600.5 376v7M600.5 384v1M600.5 387v8M600.5 397v1M600.5 401v1M600.5 427v13M601.5 370v4M601.5 375v2M601.5 387v1M601.5 389v4M601.5 395v1M601.5 401v1M601.5 427v6M601.5 438v2M602.5 391v1M602.5 429v1M633.5 380v3M633.5 385v4M633.5 390v3M634.5 368v3M634.5 372v1M634.5 374v1M634.5 376v17M635.5 368v11M636.5 369v1M636.5 374v2M658.5 378v1M658.5 380v1M658.5 382v1M658.5 384v1M658.5 386v1M658.5 388v2M658.5 391v1M658.5 398v2M658.5 401v1M659.5 378v26M659.5 405v1M659.5 407v1M659.5 409v1M659.5 411v5M659.5 419v1M659.5 424v1M660.5 381v1M660.5 383v1M660.5 394v1M660.5 397v1M660.5 401v1M660.5 403v24M661.5 403v1M661.5 406v2M661.5 412v1M661.5 414v1M661.5 418v1M661.5 423v2M661.5 426v1M684.5 390v1M684.5 392v1M684.5 394v1M684.5 398v3M684.5 426v1M684.5 428v3M685.5 389v1M685.5 391v6M685.5 398v6M685.5 405v3M685.5 410v1M685.5 426v7M686.5 394v1M686.5 401v8M686.5 427v2M686.5 431v4M687.5 401v1M687.5 404v2M687.5 407v1M687.5 410v1"/>
<path stroke="#00e044" d="M127.5 187v3M127.5 191v1M127.5 193v1M127.5 195v1M127.5 198v2M127.5 203v2M127.5 207v1M127.5 212v5M127.5 218v1M127.5 220v1M127.5 222v3M127.5 238v1M127.5 240v3M127.5 245v1M127.5 247v2M127.5 257v3M127.5 265v1M127.5 267v6M127.5 275v3M127.5 288v1M127.5 290v1M127.5 294v1M127.5 296v2M127.5 299v1M128.5 187v9M128.5 199v3M128.5 203v2M128.5 206v1M128.5 208v3M128.5 216v3M128.5 220v3M128.5 224v1M128.5 226v1M128.5 239v1M128.5 241v1M128.5 244v3M128.5 254v3M128.5 261v5M128.5 267v1M128.5 275v4M128.5 281v1M128.5 286v1M128.5 293v1M128.5 295v1M128.5 299v1M129.5 187v1M129.5 189v3M129.5 197v1M129.5 210v1M129.5 243v1M129.5 248v1M129.5 250v1M129.5 265v1M129.5 267v1M129.5 276v1M129.5 283v2M129.5 286v1M129.5 288v2M152.5 294v3M152.5 298v3M152.5 303v3M152.5 310v1M153.5 240v1M153.5 243v2M153.5 246v1M153.5 248v1M153.5 251v2M153.5 254v2M153.5 257v3M153.5 261v2M153.5 264v4M153.5 274v4M153.5 284v2M153.5 287v2M153.5 290v3M153.5 294v1M153.5 296v1M153.5 298v6M153.5 305v5M153.5 313v2M154.5 251v3M154.5 275v3M154.5 281v1M154.5 289v1M154.5 292v1M154.5 304v2M154.5 309v2M154.5 313v1M178.5 406v1M178.5 408v1M178.5 410v1M178.5 412v3M178.5 417v2M178.5 420v1M179.5 332v4M179.5 338v1M179.5 340v1M179.5 342v6M179.5 349v1M179.5 351v2M179.5 354v3M179.5 363v1M179.5 365v1M179.5 374v1M179.5 406v2M179.5 410v1M179.5 412v8M180.5 332v2M180.5 337v2M180.5 343v1M180.5 355v1M180.5 357v1M180.5 365v1M180.5 412v1M180.5 414v1M180.5 416v1M180.5 419v2M212.5 223v1M212.5 229v1M212.5 231v2M212.5 234v1M212.5 236v1M212.5 238v3M212.5 242v1M212.5 248v1M212.5 250v1M212.5 256v1M212.5 258v1M212.5 261v1M212.5 264v2M212.5 268v2M212.5 271v3M212.5 277v1M212.5 279v1M212.5 282v1M212.5 284v4M212.5 290v1M212.5 292v10M212.5 303v1M212.5 307v1M212.5 310v2M212.5 315v1M212.5 317v2M212.5 322v1M212.5 326v1M212.5 328v1M212.5 330v4M212.5 335v1M212.5 338v7M212.5 346v1M212.5 348v4M212.5 353v2M212.5 356v2M213.5 222v3M213.5 227v1M213.5 229v3M213.5 233v1M213.5 235v1M213.5 237v1M213.5 242v1M213.5 245v3M213.5 249v2M213.5 252v1M213.5 256v1M213.5 259v1M213.5 262v1M213.5 264v3M213.5 269v3M213.5 273v1M213.5 278v1M213.5 280v1M213.5 282v2M213.5 285v1M213.5 287v1M213.5 289v2M213.5 292v1M213.5 296v1M213.5 298v1M213.5 301v1M213.5 303v5M213.5 309v2M213.5 314v2M213.5 318v1M213.5 320v2M213.5 323v1M213.5 326v2M213.5 329v1M213.5 334v2M213.5 337v3M213.5 341v1M213.5 343v1M213.5 345v7M213.5 353v1M213.5 355v3M214.5 231v1M214.5 241v1M214.5 292v1M214.5 294v1M214.5 296v1M214.5 298v1M214.5 308v1M214.5 319v2M214.5 323v1M214.5 327v1M214.5 330v2M214.5 337v1M214.5 344v1M214.5 351v1M214.5 356v1M236.5 258v2M236.5 262v1M236.5 265v1M236.5 267v1M236.5 270v1M236.5 272v2M236.5 278v1M236.5 281v1M236.5 283v1M236.5 285v1M236.5 287v3M236.5 291v2M236.5 297v1M236.5 299v2M236.5 302v2M236.5 305v3M236.5 309v1M236.5 313v7M236.5 321v1M236.5 323v1M237.5 255v1M237.5 260v2M237.5 263v1M237.5 265v3M237.5 270v4M237.5 275v5M237.5 282v1M237.5 284v7M237.5 292v2M237.5 296v6M237.5 303v1M237.5 305v2M237.5 308v3M237.5 312v1M237.5 314v1M237.5 316v2M237.5 320v1M237.5 322v3M237.5 326v1M237.5 328v1M238.5 255v1M238.5 261v1M238.5 263v1M238.5 271v1M238.5 273v1M238.5 282v1M238.5 285v1M238.5 290v6M238.5 297v1M238.5 305v3M238.5 310v1M238.5 313v1M238.5 326v1M262.5 297v1M262.5 306v6M262.5 314v1M262.5 316v2M262.5 321v2M262.5 332v1M262.5 334v1M262.5 336v3M262.5 345v3M262.5 349v8M262.5 362v2M263.5 295v2M263.5 298v2M263.5 301v1M263.5 303v1M263.5 305v1M263.5 308v5M263.5 314v11M263.5 330v4M263.5 335v1M263.5 337v3M263.5 341v1M263.5 345v5M263.5 353v1M263.5 355v1M263.5 357v4M264.5 293v1M264.5 295v1M264.5 300v1M264.5 307v1M264.5 309v1M264.5 318v2M264.5 322v4M264.5 327v1M264.5 330v2M264.5 335v1M264.5 352v1M336.5 297v1M336.5 303v1M336.5 305v1M336.5 307v1M336.5 310v1M336.5 317v1M336.5 319v2M336.5 322v2M336.5 325v3M336.5 333v1M337.5 296v1M337.5 298v2M337.5 301v1M337.5 303v1M337.5 305v3M337.5 314v2M337.5 318v1M337.5 322v11M337.5 335v1M338.5 297v1M338.5 299v1M338.5 302v1M338.5 313v1M338.5 318v1M338.5 327v1M338.5 336v1M362.5 306v1M362.5 311v1M362.5 313v1M362.5 320v3M362.5 326v1M362.5 329v1M362.5 331v1M362.5 333v2M362.5 343v6M362.5 356v2M362.5 359v1M362.5 367v1M362.5 369v1M363.5 306v1M363.5 309v1M363.5 311v4M363.5 316v1M363.5 318v2M363.5 324v1M363.5 327v3M363.5 333v2M363.5 343v9M363.5 353v5M363.5 359v8M363.5 368v1M363.5 371v1M364.5 311v1M364.5 313v1M364.5 319v1M364.5 321v1M364.5 323v1M364.5 325v1M364.5 327v2M364.5 330v1M364.5 334v1M364.5 344v1M364.5 346v1M364.5 354v1M364.5 359v1M386.5 224v2M386.5 259v2M386.5 264v1M386.5 267v2M386.5 270v4M386.5 275v1M386.5 277v1M386.5 280v1M386.5 287v1M386.5 290v1M386.5 295v1M386.5 365v1M386.5 367v2M386.5 370v1M386.5 372v1M386.5 374v1M386.5 376v1M386.5 378v1M387.5 223v1M387.5 228v2M387.5 234v1M387.5 257v1M387.5 259v1M387.5 261v2M387.5 264v1M387.5 266v1M387.5 269v1M387.5 272v1M387.5 274v1M387.5 277v3M387.5 281v1M387.5 283v1M387.5 291v1M387.5 299v1M387.5 350v15M387.5 369v3M387.5 373v1M387.5 378v1M388.5 256v1M388.5 276v2M388.5 281v1M388.5 289v1M388.5 291v1M388.5 299v1M388.5 366v1M388.5 375v1M388.5 378v1M420.5 273v6M420.5 280v2M420.5 283v2M420.5 286v1M420.5 288v2M420.5 293v1M420.5 299v1M420.5 302v1M420.5 304v2M420.5 311v1M420.5 313v1M420.5 316v1M420.5 318v1M420.5 332v1M420.5 337v1M420.5 342v2M420.5 345v1M420.5 347v4M420.5 352v7M421.5 275v1M421.5 279v1M421.5 285v6M421.5 292v1M421.5 294v1M421.5 296v3M421.5 304v2M421.5 307v1M421.5 309v1M421.5 312v2M421.5 315v2M421.5 320v4M421.5 325v1M421.5 328v1M421.5 330v1M421.5 334v1M421.5 336v1M421.5 338v2M421.5 342v1M421.5 345v5M421.5 351v1M421.5 353v3M421.5 357v3M421.5 361v1M421.5 363v1M421.5 365v2M421.5 368v1M421.5 370v3M421.5 374v1M422.5 274v1M422.5 288v1M422.5 295v1M422.5 297v1M422.5 299v1M422.5 307v1M422.5 310v2M422.5 313v2M422.5 316v1M422.5 328v2M422.5 331v1M422.5 334v1M422.5 343v3M422.5 349v2M422.5 352v1M422.5 358v1M422.5 365v1M422.5 369v1M446.5 336v2M446.5 340v1M446.5 345v7M446.5 353v2M446.5 356v2M446.5 359v1M446.5 362v1M446.5 364v1M446.5 366v1M446.5 368v1M446.5 371v2M447.5 334v2M447.5 338v1M447.5 340v7M447.5 348v7M447.5 356v3M447.5 360v7M447.5 368v2M447.5 371v2M448.5 334v1M448.5 337v1M448.5 341v1M448.5 352v1M448.5 354v2M448.5 358v1M448.5 363v1M448.5 366v1M448.5 368v5M471.5 267v1M471.5 269v1M471.5 271v3M471.5 275v1M471.5 280v1M471.5 289v2M471.5 300v1M471.5 306v2M471.5 309v1M471.5 313v1M471.5 316v1M471.5 319v1M471.5 341v2M471.5 344v1M471.5 347v1M471.5 349v1M471.5 351v1M471.5 354v2M471.5 361v3M472.5 267v1M472.5 271v6M472.5 279v2M472.5 283v2M472.5 287v2M472.5 291v1M472.5 293v2M472.5 300v1M472.5 302v1M472.5 307v2M472.5 312v3M472.5 318v1M472.5 320v2M472.5 324v2M472.5 327v1M472.5 329v1M472.5 334v1M472.5 340v2M472.5 343v1M472.5 349v1M472.5 351v4M472.5 358v4M472.5 363v1M473.5 271v3M473.5 281v1M473.5 287v1M473.5 294v1M473.5 296v1M473.5 299v1M473.5 308v2M473.5 311v1M473.5 313v1M473.5 316v1M473.5 318v1M473.5 323v3M473.5 330v1M473.5 340v1M473.5 347v1M473.5 349v2M473.5 352v1M473.5 359v1M551.5 359v1M551.5 362v1M551.5 366v1M551.5 369v3M552.5 345v1M552.5 347v4M552.5 352v1M552.5 354v3M552.5 358v2M552.5 362v7M552.5 370v22M553.5 345v2M553.5 348v8M553.5 357v1M553.5 360v1M553.5 367v1M553.5 392v20M554.5 353v1M554.5 356v1M576.5 358v2M576.5 361v4M576.5 378v2M576.5 381v2M577.5 358v14M577.5 377v6M578.5 361v1M578.5 363v14M578.5 380v1M579.5 365v2M579.5 371v1M579.5 376v1M602.5 401v1M602.5 407v1M602.5 410v1M602.5 443v4M602.5 448v2M603.5 400v4M603.5 409v4M603.5 436v14M604.5 388v10M604.5 436v7M604.5 446v1M635.5 379v14M635.5 394v1M635.5 412v2M635.5 415v4M636.5 379v18M636.5 399v1M636.5 401v5M636.5 407v1M636.5 410v3M636.5 414v1M636.5 417v1M636.5 419v1M636.5 422v1M636.5 424v2M637.5 382v1M637.5 390v1M637.5 392v1M637.5 396v17M637.5 417v1M637.5 420v1M637.5 424v1M637.5 426v1M638.5 396v1M638.5 401v1M638.5 412v1M638.5 424v2M661.5 401v2M661.5 415v1M661.5 430v2M661.5 433v2M661.5 450v1M662.5 400v11M662.5 412v1M662.5 414v1M662.5 416v1M662.5 422v1M662.5 426v1M662.5 428v1M662.5 430v8M662.5 439v1M662.5 444v1M662.5 446v11M663.5 417v5M663.5 423v1M663.5 425v6M663.5 435v13M686.5 412v2M686.5 415v1M686.5 417v2M687.5 411v8M687.5 420v2M688.5 417v1M688.5 419v2M688.5 422v3M688.5 426v1M689.5 422v1"/>
<path stroke="#6000f0" d="M129.5 193v4M129.5 198v1M129.5 200v1M129.5 202v4M129.5 207v2M129.5 213v1M129.5 216v4M129.5 221v7M129.5 229v1M129.5 231v4M129.5 236v2M129.5 240v2M129.5 244v1M129.5 246v2M129.5 249v1M129.5 251v10M129.5 262v1M129.5 269v3M129.5 273v3M130.5 193v18M130.5 212v12M130.5 225v8M130.5 234v12M130.5 247v5M130.5 254v3M130.5 259v17M131.5 196v1M131.5 201v1M131.5 207v2M131.5 211v2M131.5 216v3M131.5 220v1M131.5 222v2M131.5 225v1M131.5 230v3M131.5 234v2M131.5 237v2M131.5 240v1M131.5 242v1M131.5 245v1M131.5 248v1M131.5 252v1M131.5 254v2M131.5 257v2M131.5 261v1M131.5 263v1M131.5 270v1M131.5 272v1M131.5 274v1M155.5 190v1M155.5 192v3M155.5 199v2M155.5 202v6M155.5 209v2M155.5 213v1M155.5 218v4M155.5 223v1M155.5 225v1M155.5 227v6M155.5 234v2M155.5 240v1M155.5 244v1M155.5 246v4M155.5 251v1M155.5 256v1M155.5 260v9M155.5 270v1M155.5 272v9M155.5 305v2M155.5 308v2M155.5 316v2M155.5 319v4M155.5 325v1M155.5 327v2M155.5 330v1M155.5 332v3M155.5 336v4M156.5 189v6M156.5 196v3M156.5 200v2M156.5 203v1M156.5 205v2M156.5 209v2M156.5 212v6M156.5 219v3M156.5 223v9M156.5 233v4M156.5 238v2M156.5 243v4M156.5 249v1M156.5 251v1M156.5 253v6M156.5 260v11M156.5 272v2M156.5 275v1M156.5 277v4M156.5 283v2M156.5 286v1M156.5 303v1M156.5 307v1M156.5 309v2M156.5 312v1M156.5 314v1M156.5 316v4M156.5 321v4M156.5 326v1M156.5 330v5M156.5 336v1M156.5 339v2M157.5 191v1M157.5 195v1M157.5 197v7M157.5 206v1M157.5 213v1M157.5 218v1M157.5 222v3M157.5 226v1M157.5 228v2M157.5 231v4M157.5 236v1M157.5 240v1M157.5 242v1M157.5 244v3M157.5 255v3M157.5 259v3M157.5 264v1M157.5 268v2M157.5 273v1M157.5 276v5M157.5 286v1M157.5 304v1M157.5 314v2M157.5 318v1M157.5 321v2M157.5 326v1M157.5 333v1M157.5 335v1M157.5 339v1M181.5 362v5M181.5 368v1M181.5 370v2M181.5 373v5M181.5 379v2M181.5 386v3M181.5 399v4M181.5 404v1M181.5 414v3M181.5 418v2M182.5 360v22M182.5 384v11M182.5 401v3M182.5 406v1M182.5 409v1M182.5 412v1M182.5 416v1M182.5 418v2M183.5 360v2M183.5 367v1M183.5 373v1M183.5 378v1M183.5 383v1M183.5 385v2M183.5 390v1M183.5 407v1M183.5 410v1M183.5 415v1M189.5 296v1M189.5 302v3M189.5 306v1M189.5 309v6M189.5 321v1M189.5 324v1M189.5 329v1M190.5 296v1M190.5 301v10M190.5 312v6M190.5 319v1M190.5 321v4M190.5 326v1M190.5 328v2M190.5 331v1M191.5 301v1M191.5 303v1M191.5 308v1M191.5 315v3M191.5 323v2M191.5 327v1M191.5 330v1M214.5 228v3M214.5 232v5M214.5 238v3M214.5 243v5M214.5 250v9M214.5 260v5M214.5 267v2M214.5 285v1M214.5 289v1M214.5 293v1M214.5 304v1M214.5 313v1M214.5 318v1M215.5 202v6M215.5 209v1M215.5 215v3M215.5 219v3M215.5 223v4M215.5 228v6M215.5 235v7M215.5 245v1M215.5 247v1M215.5 250v6M215.5 257v8M215.5 267v3M215.5 271v1M215.5 274v1M215.5 276v1M215.5 278v3M215.5 286v1M215.5 288v1M215.5 291v1M215.5 294v2M215.5 298v1M215.5 301v1M215.5 303v4M215.5 308v1M215.5 310v1M216.5 203v1M216.5 209v2M216.5 215v6M216.5 223v1M216.5 230v1M216.5 232v1M216.5 235v2M216.5 239v2M216.5 244v1M216.5 246v1M216.5 252v2M216.5 255v1M216.5 262v1M216.5 267v1M216.5 269v3M216.5 274v1M216.5 283v1M239.5 314v1M239.5 316v1M239.5 319v1M239.5 321v2M239.5 324v10M240.5 259v6M240.5 266v2M240.5 275v1M240.5 280v1M240.5 283v5M240.5 291v2M240.5 313v21M241.5 258v1M241.5 261v1M241.5 266v1M241.5 268v1M241.5 283v1M241.5 287v1M241.5 313v1M241.5 320v1M241.5 331v1M264.5 338v2M264.5 341v4M264.5 346v3M264.5 350v1M264.5 353v2M264.5 357v1M264.5 359v12M264.5 372v1M264.5 374v5M264.5 380v1M264.5 382v1M264.5 387v1M264.5 390v1M264.5 396v1M265.5 335v1M265.5 339v1M265.5 344v3M265.5 348v1M265.5 350v1M265.5 352v1M265.5 355v29M265.5 385v3M265.5 389v1M265.5 391v1M265.5 395v13M266.5 336v1M266.5 339v1M266.5 343v1M266.5 352v1M266.5 355v2M266.5 359v1M266.5 361v1M266.5 363v2M266.5 366v1M266.5 368v1M266.5 374v2M266.5 377v2M266.5 388v1M266.5 390v1M339.5 248v2M339.5 254v1M339.5 257v1M339.5 266v1M339.5 274v1M339.5 278v6M339.5 288v2M339.5 292v3M339.5 298v1M339.5 301v1M339.5 303v3M339.5 308v3M339.5 312v4M339.5 319v2M339.5 322v1M339.5 326v5M340.5 248v5M340.5 254v1M340.5 259v4M340.5 264v2M340.5 267v4M340.5 273v1M340.5 275v41M340.5 320v2M340.5 323v1M340.5 325v1M340.5 327v1M340.5 329v1M341.5 253v1M341.5 259v2M341.5 264v1M341.5 269v1M341.5 277v2M341.5 282v3M341.5 286v1M341.5 289v1M341.5 291v1M341.5 294v2M341.5 300v1M341.5 309v1M341.5 311v4M364.5 332v1M364.5 335v1M364.5 337v3M364.5 343v1M364.5 345v1M364.5 350v1M364.5 353v1M364.5 355v2M364.5 361v1M364.5 363v1M364.5 365v2M364.5 369v6M364.5 376v1M364.5 381v1M364.5 383v3M364.5 388v1M364.5 394v1M364.5 396v1M364.5 399v1M364.5 427v5M364.5 433v2M365.5 331v30M365.5 363v1M365.5 368v3M365.5 372v1M365.5 374v4M365.5 384v2M365.5 391v1M365.5 393v1M365.5 395v1M365.5 401v1M365.5 403v4M365.5 408v5M365.5 417v4M365.5 424v1M365.5 426v9M366.5 331v3M366.5 340v1M366.5 342v1M366.5 344v1M366.5 350v2M366.5 353v1M366.5 358v4M366.5 366v1M366.5 368v1M366.5 370v1M366.5 375v1M366.5 380v1M366.5 391v1M366.5 393v1M366.5 399v1M366.5 405v1M366.5 423v1M366.5 427v5M366.5 433v1M389.5 250v1M389.5 255v4M389.5 260v7M389.5 268v1M389.5 270v2M389.5 273v4M389.5 279v1M389.5 281v2M389.5 286v1M389.5 292v1M389.5 294v1M389.5 296v1M389.5 301v1M389.5 305v3M389.5 309v1M389.5 312v1M389.5 314v7M389.5 363v3M389.5 368v6M389.5 375v6M389.5 382v3M389.5 387v1M390.5 250v17M390.5 271v1M390.5 273v1M390.5 275v7M390.5 284v2M390.5 287v4M390.5 294v1M390.5 303v1M390.5 305v8M390.5 317v1M390.5 320v1M390.5 362v20M390.5 383v2M390.5 387v2M391.5 251v1M391.5 254v1M391.5 261v1M391.5 263v1M391.5 268v3M391.5 278v1M391.5 284v1M391.5 292v1M391.5 301v1M391.5 306v1M391.5 314v1M391.5 318v1M391.5 363v1M391.5 365v1M391.5 367v2M391.5 370v2M391.5 377v3M391.5 381v1M423.5 280v1M423.5 282v1M423.5 285v2M423.5 288v13M423.5 302v1M423.5 304v8M423.5 313v1M423.5 317v2M423.5 326v3M423.5 330v2M423.5 333v1M424.5 268v2M424.5 271v3M424.5 275v41M424.5 317v3M424.5 321v1M424.5 323v1M424.5 330v4M424.5 335v2M424.5 339v1M425.5 283v1M425.5 286v1M425.5 292v2M425.5 295v2M425.5 299v1M425.5 301v2M425.5 305v1M425.5 307v1M425.5 310v1M425.5 334v1M425.5 340v1M448.5 317v2M448.5 320v8M448.5 329v1M448.5 336v1M448.5 338v3M448.5 343v3M448.5 348v4M449.5 317v35M450.5 319v4M450.5 325v2M450.5 328v1M450.5 332v4M450.5 337v2M450.5 341v2M450.5 346v1M450.5 348v1M450.5 350v2M474.5 283v1M474.5 285v1M474.5 288v4M474.5 294v3M474.5 298v7M474.5 306v1M474.5 308v1M474.5 311v3M474.5 315v1M475.5 277v40M476.5 278v1M476.5 284v1M476.5 288v1M476.5 292v1M476.5 296v1M476.5 305v2M476.5 309v1M476.5 311v2M553.5 307v3M553.5 313v1M553.5 315v1M553.5 317v3M553.5 326v9M553.5 361v6M553.5 369v1M554.5 307v32M554.5 340v4M554.5 345v8M554.5 354v2M554.5 357v2M554.5 360v10M554.5 373v1M554.5 375v3M555.5 309v1M555.5 315v2M555.5 318v1M555.5 321v1M555.5 324v1M555.5 327v1M555.5 329v1M555.5 335v27M555.5 364v1M555.5 367v1M555.5 370v8M556.5 343v1M556.5 345v1M556.5 347v1M556.5 349v1M556.5 375v1M579.5 355v5M579.5 387v1M579.5 391v2M579.5 394v1M579.5 408v1M579.5 410v3M580.5 355v20M580.5 376v2M580.5 388v1M580.5 390v1M580.5 393v5M580.5 408v1M580.5 410v6M581.5 357v1M581.5 365v8M581.5 378v1M581.5 381v3M581.5 398v1M581.5 401v3M582.5 367v1M582.5 370v1M604.5 409v1M604.5 414v1M604.5 420v2M604.5 425v6M604.5 466v5M605.5 403v1M605.5 407v1M605.5 409v2M605.5 412v7M605.5 420v7M605.5 428v3M605.5 451v8M605.5 466v6M605.5 473v2M606.5 403v4M606.5 408v1M606.5 414v6M606.5 425v1M606.5 429v1M606.5 459v8M606.5 469v1M606.5 471v4M607.5 414v2M607.5 473v1M638.5 409v3M638.5 417v1M638.5 419v2M639.5 377v1M639.5 379v9M639.5 397v1M639.5 399v1M639.5 401v1M639.5 404v1M639.5 408v13M640.5 367v10M640.5 379v1M640.5 384v1M640.5 396v13M640.5 414v1M640.5 416v1M641.5 367v2M641.5 371v1M641.5 374v2M641.5 403v1M641.5 405v2M663.5 451v6M663.5 460v1M663.5 462v1M663.5 465v1M663.5 467v1M663.5 470v1M663.5 473v2M664.5 438v5M664.5 444v6M664.5 451v16M664.5 468v12M665.5 438v13M665.5 452v2M665.5 456v2M665.5 459v1M665.5 471v2M665.5 474v6M666.5 441v1M666.5 445v2M666.5 475v1M666.5 479v1M689.5 400v1M689.5 404v3M689.5 410v1M689.5 412v2M689.5 426v1M689.5 428v1M689.5 430v1M690.5 400v16M690.5 418v1M690.5 420v2M690.5 423v1M690.5 425v3M690.5 430v5M691.5 400v1M691.5 403v1M691.5 405v1M691.5 407v2M691.5 411v1M691.5 414v14M691.5 429v1M691.5 431v2M691.5 434v1M692.5 418v2M692.5 431v1"/>
</g>
</svg></body></html>
